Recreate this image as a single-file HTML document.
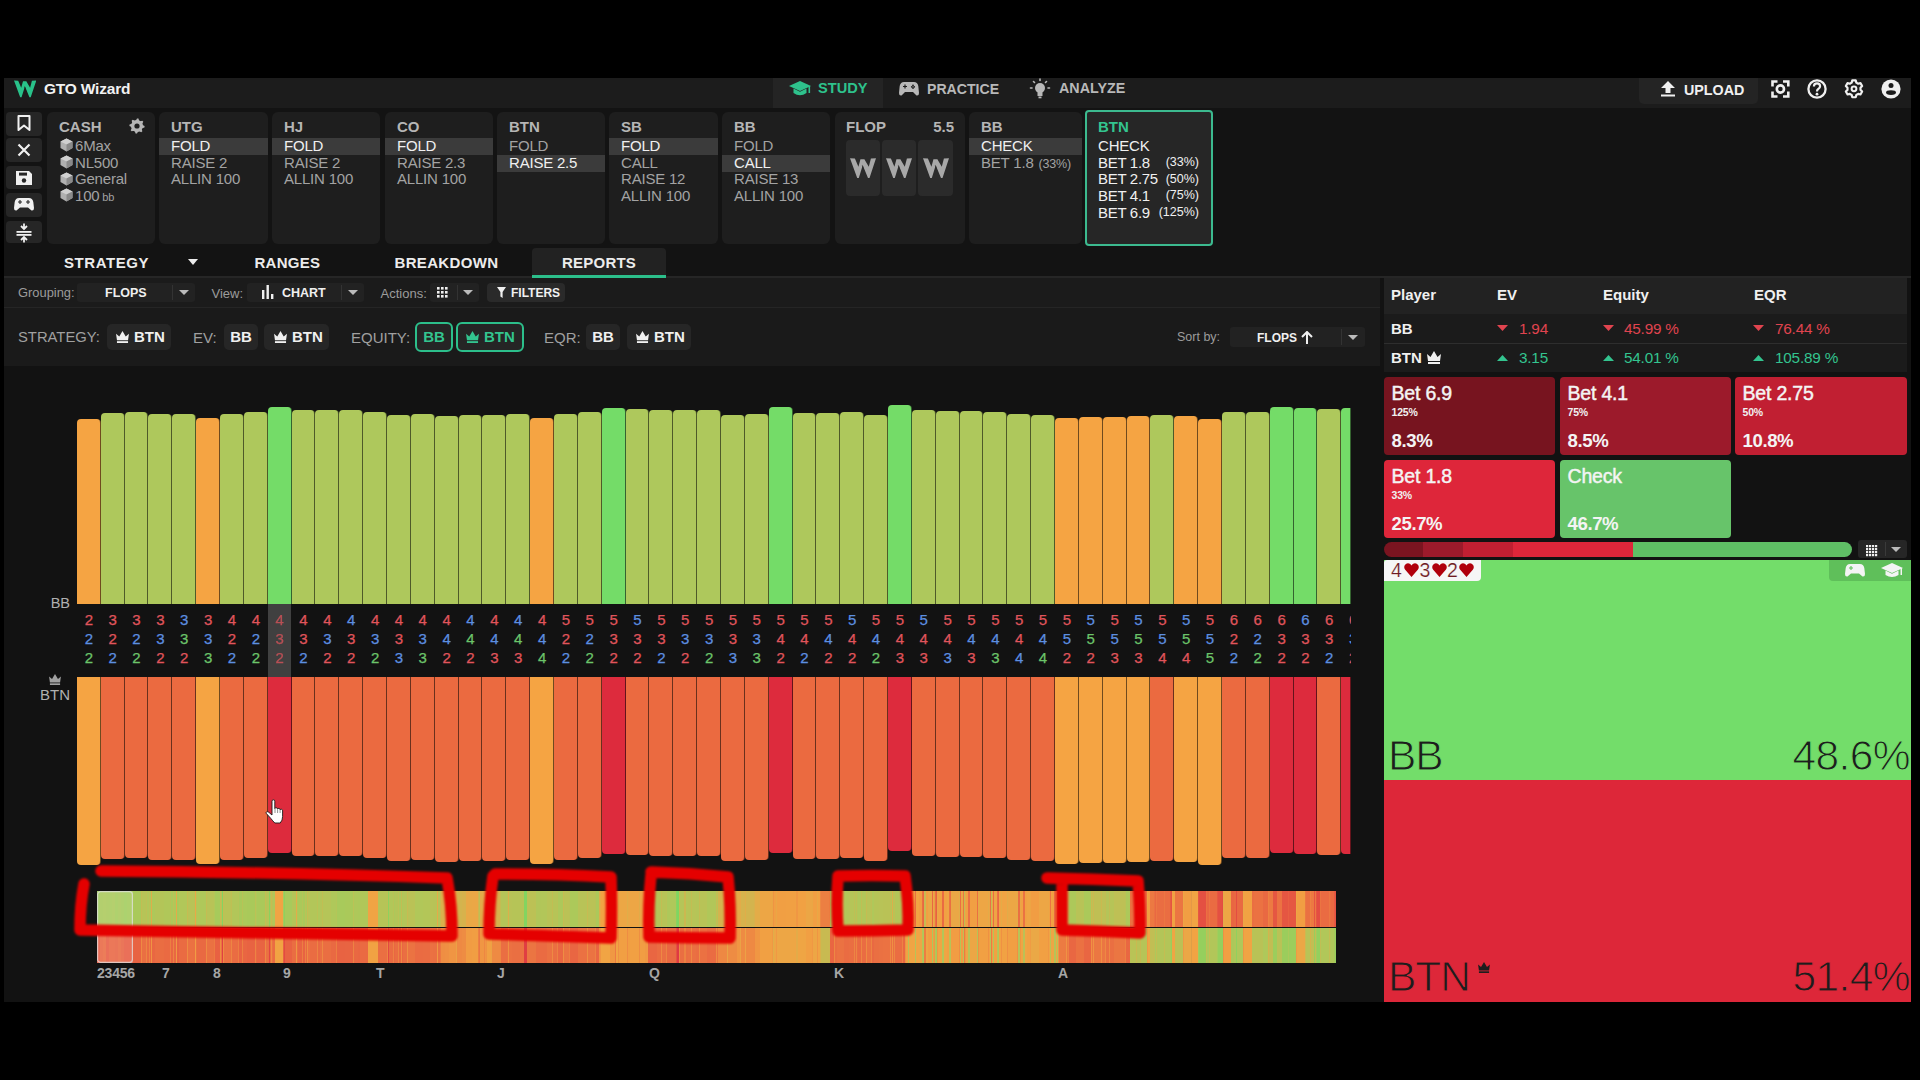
<!DOCTYPE html><html><head><meta charset="utf-8"><style>
html,body{margin:0;padding:0;background:#000;width:1920px;height:1080px;overflow:hidden;}
body{position:relative;font-family:"Liberation Sans",sans-serif;}
div{position:absolute;box-sizing:border-box;}
.t{white-space:nowrap;}
</style></head><body>
<div style="left:4px;top:78px;width:1907px;height:924px;background:#131313;"></div>
<div style="left:4px;top:78px;width:1907px;height:30px;background:#1c1c1c;"></div>
<svg style="position:absolute;left:14px;top:80.4px;" width="22.3" height="17.6" viewBox="0 0 26 20"><g fill="#29c28a"><polygon points="0,0.3 4.9,0.5 8.4,8.7 10.4,1.5 14.5,1.5 8.8,20 7.2,20"/><polygon points="10.4,1.5 14.5,1.5 18.8,8.7 20.9,0.5 26,0.3 19.5,20 18,20"/></g><line x1="12.3" y1="7.5" x2="15.6" y2="18.5" stroke="#1c1c1c" stroke-width="0.7"/></svg>
<div class="t" style="left:44px;top:78.8px;height:19.5px;line-height:19.5px;font-size:15.5px;color:#f2f2f2;font-weight:bold;letter-spacing:-0.2px;">GTO Wizard</div>
<div style="left:773px;top:78px;width:110px;height:30px;background:#242424;"></div>
<svg style="position:absolute;left:789px;top:80px;" width="22" height="18" viewBox="0 0 22 18"><path d="M11,1 L22,6 L11,11 L0,6 Z" fill="#2ec28c"/><path d="M4.5,8.5 L4.5,13 Q11,17.5 17.5,13 L17.5,8.5 L11,11.8 Z" fill="#2ec28c"/><rect x="19.5" y="6" width="1.6" height="7" fill="#2ec28c"/></svg>
<div class="t" style="left:818px;top:79.2px;height:18.6px;line-height:18.6px;font-size:14.6px;color:#2ec28c;font-weight:bold;">STUDY</div>
<svg style="position:absolute;left:899px;top:81px;" width="20" height="15" viewBox="0 0 20 15"><path d="M5,1 L15,1 Q18.5,1 19.3,5 L20,12 Q20,15 17.5,14.5 L14,11 L6,11 L2.5,14.5 Q0,15 0,12 L0.7,5 Q1.5,1 5,1 Z" fill="#b8b8b8"/><path d="M4,5.5 h4 M6,3.5 v4" stroke="#1c1c1c" stroke-width="1.2"/><circle cx="14" cy="4.5" r="0.9" fill="#1c1c1c"/><circle cx="14" cy="7" r="0.9" fill="#1c1c1c"/><circle cx="12.8" cy="5.8" r="0.9" fill="#1c1c1c"/><circle cx="15.2" cy="5.8" r="0.9" fill="#1c1c1c"/></svg>
<div class="t" style="left:927px;top:79.5px;height:18.1px;line-height:18.1px;font-size:14.1px;color:#b8b8b8;font-weight:bold;">PRACTICE</div>
<svg style="position:absolute;left:1029px;top:78px;" width="22" height="22" viewBox="0 0 22 22"><circle cx="11" cy="10" r="5" fill="#b8b8b8"/><rect x="8.5" y="13" width="5" height="5" fill="#b8b8b8"/><rect x="9.5" y="18.5" width="3" height="1.8" fill="#b8b8b8"/><g stroke="#b8b8b8" stroke-width="1.6" stroke-linecap="round"><line x1="11" y1="1" x2="11" y2="2.5"/><line x1="4.5" y1="3.5" x2="5.5" y2="4.5"/><line x1="17.5" y1="3.5" x2="16.5" y2="4.5"/><line x1="1.5" y1="10" x2="3" y2="10"/><line x1="19" y1="10" x2="20.5" y2="10"/></g></svg>
<div class="t" style="left:1059px;top:79.3px;height:18.3px;line-height:18.3px;font-size:14.3px;color:#b8b8b8;font-weight:bold;">ANALYZE</div>
<div style="left:1639px;top:78px;width:119px;height:26px;background:#242424;border-radius:0 0 5px 5px;"></div>
<svg style="position:absolute;left:1660px;top:81px;" width="16" height="16" viewBox="0 0 16 16"><path d="M8,0 L15,7 L10.5,7 L10.5,12 L5.5,12 L5.5,7 L1,7 Z" fill="#f0f0f0"/><rect x="1" y="13.5" width="14" height="2" fill="#f0f0f0"/></svg>
<div class="t" style="left:1684px;top:81.3px;height:18.3px;line-height:18.3px;font-size:14.3px;color:#f0f0f0;font-weight:bold;">UPLOAD</div>
<svg style="position:absolute;left:1771px;top:80px;" width="19" height="18" viewBox="0 0 19 18"><g fill="none" stroke="#f0f0f0" stroke-width="2.6"><path d="M1.5,6.5 V1.5 H6.5"/><path d="M12,1.5 H17.3 V6.5"/><path d="M17.3,11.5 V16.5 H12"/><path d="M6.5,16.5 H1.5 V11.5"/></g><circle cx="9.4" cy="9" r="3.6" fill="none" stroke="#f0f0f0" stroke-width="2.6"/></svg>
<svg style="position:absolute;left:1807px;top:79px;" width="20" height="20" viewBox="0 0 20 20"><circle cx="10" cy="10" r="8.6" fill="none" stroke="#f0f0f0" stroke-width="2.3"/><path d="M6.9,7.6 Q6.9,4.4 10,4.4 Q13.1,4.4 13.1,7.2 Q13.1,9 11,10.2 Q10,10.8 10,12.4" fill="none" stroke="#f0f0f0" stroke-width="2.2"/><circle cx="10" cy="15.2" r="1.4" fill="#f0f0f0"/></svg>
<svg style="position:absolute;left:1844px;top:79px;" width="20" height="20" viewBox="0 0 20 20"><polygon points="7.67,3.62 8.29,1.37 11.71,1.37 12.33,3.62 14.19,4.70 16.45,4.11 18.15,7.07 16.51,8.73 16.51,10.87 18.15,12.53 16.45,15.49 14.19,14.90 12.33,15.98 11.71,18.23 8.29,18.23 7.67,15.98 5.81,14.90 3.55,15.49 1.85,12.53 3.49,10.87 3.49,8.73 1.85,7.07 3.55,4.11 5.81,4.70" fill="none" stroke="#f0f0f0" stroke-width="2.2" stroke-linejoin="round"/><circle cx="10" cy="9.8" r="2.4" fill="none" stroke="#f0f0f0" stroke-width="2"/></svg>
<svg style="position:absolute;left:1881px;top:79px;" width="20" height="20" viewBox="0 0 20 20"><circle cx="10" cy="10" r="9.6" fill="#f0f0f0"/><circle cx="10" cy="6.6" r="2.5" fill="#1c1c1c"/><ellipse cx="10" cy="13.6" rx="5" ry="2.3" fill="#1c1c1c"/></svg>
<div style="left:6px;top:112px;width:36px;height:24px;background:#262626;border-radius:4px;"></div>
<div style="left:6px;top:138px;width:36px;height:24px;background:#262626;border-radius:4px;"></div>
<div style="left:6px;top:166px;width:36px;height:23px;background:#262626;border-radius:4px;"></div>
<div style="left:6px;top:193px;width:36px;height:24px;background:#262626;border-radius:4px;"></div>
<div style="left:6px;top:221px;width:36px;height:22px;background:#262626;border-radius:4px;"></div>
<svg style="position:absolute;left:17px;top:115px;" width="14" height="16" viewBox="0 0 14 16"><path d="M1.5,1 H12.5 V15 L7,10.5 L1.5,15 Z" fill="none" stroke="#f0f0f0" stroke-width="2" stroke-linejoin="round"/></svg>
<svg style="position:absolute;left:17px;top:143px;" width="14" height="14" viewBox="0 0 14 14"><path d="M1.5,1.5 L12.5,12.5 M12.5,1.5 L1.5,12.5" stroke="#f0f0f0" stroke-width="2.2"/></svg>
<svg style="position:absolute;left:15px;top:170px;" width="18" height="16" viewBox="0 0 18 16"><path d="M1,1 H14 L17,4 V15 H1 Z" fill="#f0f0f0"/><rect x="4" y="2.6" width="8" height="3" fill="#262626"/><circle cx="9" cy="10.5" r="2.2" fill="#262626"/></svg>
<svg style="position:absolute;left:14px;top:197px;" width="20" height="14" viewBox="0 0 20 14"><path d="M5,1 L15,1 Q18.5,1 19.3,5 L20,11 Q20,14 17.5,13.5 L14,10.5 L6,10.5 L2.5,13.5 Q0,14 0,11 L0.7,5 Q1.5,1 5,1 Z" fill="#f0f0f0"/><path d="M4,5 h4 M6,3 v4" stroke="#262626" stroke-width="1.1"/><path d="M12,5 h4 M14,3 v4" stroke="#262626" stroke-width="1.1"/></svg>
<svg style="position:absolute;left:16px;top:223px;" width="16" height="20" viewBox="0 0 16 20"><path d="M8,0.5 V5.5 M5,3 L8,6 L11,3" fill="none" stroke="#f0f0f0" stroke-width="1.8"/><rect x="0.5" y="8" width="15" height="1.8" fill="#f0f0f0"/><rect x="0.5" y="11" width="15" height="1.8" fill="#f0f0f0"/><path d="M8,19.5 V14.5 M5,17 L8,14 L11,17" fill="none" stroke="#f0f0f0" stroke-width="1.8"/></svg>
<div style="left:47px;top:112px;width:108px;height:132px;background:#1e1e1e;border-radius:6px;"></div>
<div class="t" style="left:59px;top:116.5px;height:19px;line-height:19px;font-size:15px;color:#b5b5b5;font-weight:bold;">CASH</div>
<svg style="position:absolute;left:129px;top:118px;" width="16" height="16" viewBox="0 0 16 16"><polygon points="15.60,8.00 15.45,9.48 13.20,10.15 12.68,11.12 13.37,13.37 12.22,14.32 10.15,13.20 9.10,13.52 8.00,15.60 6.52,15.45 5.85,13.20 4.88,12.68 2.63,13.37 1.68,12.22 2.80,10.15 2.48,9.10 0.40,8.00 0.55,6.52 2.80,5.85 3.32,4.88 2.63,2.63 3.78,1.68 5.85,2.80 6.90,2.48 8.00,0.40 9.48,0.55 10.15,2.80 11.12,3.32 13.37,2.63 14.32,3.78 13.20,5.85 13.52,6.90" fill="#b5b5b5"/><circle cx="8" cy="8" r="5.928" fill="#b5b5b5"/><circle cx="8" cy="8" r="2.6" fill="#1e1e1e"/></svg>
<svg style="position:absolute;left:60px;top:138.2px;" width="13" height="14" viewBox="0 0 13 14"><path d="M6.5,0.5 L12.5,3.5 L12.5,10 L6.5,13.5 L0.5,10 L0.5,3.5 Z" fill="#b0b0b0"/><path d="M0.5,3.5 L6.5,6.5 L12.5,3.5 L6.5,0.5 Z" fill="#d0d0d0"/><path d="M6.5,6.5 L6.5,13.5 L12.5,10 L12.5,3.5 Z" fill="#8a8a8a"/></svg>
<div class="t" style="left:75px;top:135.7px;height:19px;line-height:19px;font-size:15px;color:#a3a3a3;font-weight:normal;letter-spacing:-0.2px;">6Max</div>
<svg style="position:absolute;left:60px;top:155px;" width="13" height="14" viewBox="0 0 13 14"><path d="M6.5,0.5 L12.5,3.5 L12.5,10 L6.5,13.5 L0.5,10 L0.5,3.5 Z" fill="#b0b0b0"/><path d="M0.5,3.5 L6.5,6.5 L12.5,3.5 L6.5,0.5 Z" fill="#d0d0d0"/><path d="M6.5,6.5 L6.5,13.5 L12.5,10 L12.5,3.5 Z" fill="#8a8a8a"/></svg>
<div class="t" style="left:75px;top:152.5px;height:19px;line-height:19px;font-size:15px;color:#a3a3a3;font-weight:normal;letter-spacing:-0.2px;">NL500</div>
<svg style="position:absolute;left:60px;top:171.6px;" width="13" height="14" viewBox="0 0 13 14"><path d="M6.5,0.5 L12.5,3.5 L12.5,10 L6.5,13.5 L0.5,10 L0.5,3.5 Z" fill="#b0b0b0"/><path d="M0.5,3.5 L6.5,6.5 L12.5,3.5 L6.5,0.5 Z" fill="#d0d0d0"/><path d="M6.5,6.5 L6.5,13.5 L12.5,10 L12.5,3.5 Z" fill="#8a8a8a"/></svg>
<div class="t" style="left:75px;top:169.1px;height:19px;line-height:19px;font-size:15px;color:#a3a3a3;font-weight:normal;letter-spacing:-0.2px;">General</div>
<svg style="position:absolute;left:60px;top:188.2px;" width="13" height="14" viewBox="0 0 13 14"><path d="M6.5,0.5 L12.5,3.5 L12.5,10 L6.5,13.5 L0.5,10 L0.5,3.5 Z" fill="#b0b0b0"/><path d="M0.5,3.5 L6.5,6.5 L12.5,3.5 L6.5,0.5 Z" fill="#d0d0d0"/><path d="M6.5,6.5 L6.5,13.5 L12.5,10 L12.5,3.5 Z" fill="#8a8a8a"/></svg>
<div class="t" style="left:75px;top:185.7px;height:19px;line-height:19px;font-size:15px;color:#a3a3a3;font-weight:normal;letter-spacing:-0.2px;">100<span style="font-size:11px;"> bb</span></div>
<div style="left:159px;top:112px;width:109px;height:132px;background:#1e1e1e;border-radius:6px;"></div>
<div style="left:159px;top:137.5px;width:109px;height:17.0px;background:#3b3b3b;"></div>
<div class="t" style="left:171px;top:116.7px;height:19px;line-height:19px;font-size:15px;color:#b5b5b5;font-weight:bold;">UTG</div>
<div class="t" style="left:171px;top:135.7px;height:19px;line-height:19px;font-size:15px;color:#f0f0f0;font-weight:normal;letter-spacing:-0.2px;">FOLD</div>
<div class="t" style="left:171px;top:152.5px;height:19px;line-height:19px;font-size:15px;color:#a3a3a3;font-weight:normal;letter-spacing:-0.2px;">RAISE 2</div>
<div class="t" style="left:171px;top:169.1px;height:19px;line-height:19px;font-size:15px;color:#a3a3a3;font-weight:normal;letter-spacing:-0.2px;">ALLIN 100</div>
<div style="left:272px;top:112px;width:108px;height:132px;background:#1e1e1e;border-radius:6px;"></div>
<div style="left:272px;top:137.5px;width:108px;height:17.0px;background:#3b3b3b;"></div>
<div class="t" style="left:284px;top:116.7px;height:19px;line-height:19px;font-size:15px;color:#b5b5b5;font-weight:bold;">HJ</div>
<div class="t" style="left:284px;top:135.7px;height:19px;line-height:19px;font-size:15px;color:#f0f0f0;font-weight:normal;letter-spacing:-0.2px;">FOLD</div>
<div class="t" style="left:284px;top:152.5px;height:19px;line-height:19px;font-size:15px;color:#a3a3a3;font-weight:normal;letter-spacing:-0.2px;">RAISE 2</div>
<div class="t" style="left:284px;top:169.1px;height:19px;line-height:19px;font-size:15px;color:#a3a3a3;font-weight:normal;letter-spacing:-0.2px;">ALLIN 100</div>
<div style="left:385px;top:112px;width:108px;height:132px;background:#1e1e1e;border-radius:6px;"></div>
<div style="left:385px;top:137.5px;width:108px;height:17.0px;background:#3b3b3b;"></div>
<div class="t" style="left:397px;top:116.7px;height:19px;line-height:19px;font-size:15px;color:#b5b5b5;font-weight:bold;">CO</div>
<div class="t" style="left:397px;top:135.7px;height:19px;line-height:19px;font-size:15px;color:#f0f0f0;font-weight:normal;letter-spacing:-0.2px;">FOLD</div>
<div class="t" style="left:397px;top:152.5px;height:19px;line-height:19px;font-size:15px;color:#a3a3a3;font-weight:normal;letter-spacing:-0.2px;">RAISE 2.3</div>
<div class="t" style="left:397px;top:169.1px;height:19px;line-height:19px;font-size:15px;color:#a3a3a3;font-weight:normal;letter-spacing:-0.2px;">ALLIN 100</div>
<div style="left:497px;top:112px;width:108px;height:132px;background:#1e1e1e;border-radius:6px;"></div>
<div style="left:497px;top:154.5px;width:108px;height:17.0px;background:#3b3b3b;"></div>
<div class="t" style="left:509px;top:116.7px;height:19px;line-height:19px;font-size:15px;color:#b5b5b5;font-weight:bold;">BTN</div>
<div class="t" style="left:509px;top:135.7px;height:19px;line-height:19px;font-size:15px;color:#a3a3a3;font-weight:normal;letter-spacing:-0.2px;">FOLD</div>
<div class="t" style="left:509px;top:152.5px;height:19px;line-height:19px;font-size:15px;color:#f0f0f0;font-weight:normal;letter-spacing:-0.2px;">RAISE 2.5</div>
<div style="left:609px;top:112px;width:109px;height:132px;background:#1e1e1e;border-radius:6px;"></div>
<div style="left:609px;top:137.5px;width:109px;height:17.0px;background:#3b3b3b;"></div>
<div class="t" style="left:621px;top:116.7px;height:19px;line-height:19px;font-size:15px;color:#b5b5b5;font-weight:bold;">SB</div>
<div class="t" style="left:621px;top:135.7px;height:19px;line-height:19px;font-size:15px;color:#f0f0f0;font-weight:normal;letter-spacing:-0.2px;">FOLD</div>
<div class="t" style="left:621px;top:152.5px;height:19px;line-height:19px;font-size:15px;color:#a3a3a3;font-weight:normal;letter-spacing:-0.2px;">CALL</div>
<div class="t" style="left:621px;top:169.1px;height:19px;line-height:19px;font-size:15px;color:#a3a3a3;font-weight:normal;letter-spacing:-0.2px;">RAISE 12</div>
<div class="t" style="left:621px;top:185.7px;height:19px;line-height:19px;font-size:15px;color:#a3a3a3;font-weight:normal;letter-spacing:-0.2px;">ALLIN 100</div>
<div style="left:722px;top:112px;width:108px;height:132px;background:#1e1e1e;border-radius:6px;"></div>
<div style="left:722px;top:154.5px;width:108px;height:17.0px;background:#3b3b3b;"></div>
<div class="t" style="left:734px;top:116.7px;height:19px;line-height:19px;font-size:15px;color:#b5b5b5;font-weight:bold;">BB</div>
<div class="t" style="left:734px;top:135.7px;height:19px;line-height:19px;font-size:15px;color:#a3a3a3;font-weight:normal;letter-spacing:-0.2px;">FOLD</div>
<div class="t" style="left:734px;top:152.5px;height:19px;line-height:19px;font-size:15px;color:#f0f0f0;font-weight:normal;letter-spacing:-0.2px;">CALL</div>
<div class="t" style="left:734px;top:169.1px;height:19px;line-height:19px;font-size:15px;color:#a3a3a3;font-weight:normal;letter-spacing:-0.2px;">RAISE 13</div>
<div class="t" style="left:734px;top:185.7px;height:19px;line-height:19px;font-size:15px;color:#a3a3a3;font-weight:normal;letter-spacing:-0.2px;">ALLIN 100</div>
<div style="left:835px;top:112px;width:130px;height:132px;background:#1e1e1e;border-radius:6px;"></div>
<div class="t" style="left:846px;top:116.5px;height:19px;line-height:19px;font-size:15px;color:#b5b5b5;font-weight:bold;">FLOP</div>
<div class="t" style="right:966px;top:116.5px;height:19px;line-height:19px;font-size:15px;color:#b5b5b5;font-weight:bold;">5.5</div>
<div style="left:846px;top:140px;width:34px;height:56px;background:#2b2b2b;border-radius:4px;"></div>
<svg style="position:absolute;left:850.0px;top:158px;" width="26" height="20" viewBox="0 0 26 20"><g fill="#a8a8a8"><polygon points="0,0.3 4.9,0.5 8.4,8.7 10.4,1.5 14.5,1.5 8.8,20 7.2,20"/><polygon points="10.4,1.5 14.5,1.5 18.8,8.7 20.9,0.5 26,0.3 19.5,20 18,20"/></g><line x1="12.3" y1="7.5" x2="15.6" y2="18.5" stroke="#2b2b2b" stroke-width="0.7"/></svg>
<div style="left:882px;top:140px;width:34px;height:56px;background:#2b2b2b;border-radius:4px;"></div>
<svg style="position:absolute;left:886.0px;top:158px;" width="26" height="20" viewBox="0 0 26 20"><g fill="#a8a8a8"><polygon points="0,0.3 4.9,0.5 8.4,8.7 10.4,1.5 14.5,1.5 8.8,20 7.2,20"/><polygon points="10.4,1.5 14.5,1.5 18.8,8.7 20.9,0.5 26,0.3 19.5,20 18,20"/></g><line x1="12.3" y1="7.5" x2="15.6" y2="18.5" stroke="#2b2b2b" stroke-width="0.7"/></svg>
<div style="left:918px;top:140px;width:35px;height:56px;background:#2b2b2b;border-radius:4px;"></div>
<svg style="position:absolute;left:922.5px;top:158px;" width="26" height="20" viewBox="0 0 26 20"><g fill="#a8a8a8"><polygon points="0,0.3 4.9,0.5 8.4,8.7 10.4,1.5 14.5,1.5 8.8,20 7.2,20"/><polygon points="10.4,1.5 14.5,1.5 18.8,8.7 20.9,0.5 26,0.3 19.5,20 18,20"/></g><line x1="12.3" y1="7.5" x2="15.6" y2="18.5" stroke="#2b2b2b" stroke-width="0.7"/></svg>
<div style="left:969px;top:112px;width:113px;height:132px;background:#1e1e1e;border-radius:6px;"></div>
<div style="left:969px;top:137.5px;width:113px;height:17.0px;background:#3b3b3b;"></div>
<div class="t" style="left:981px;top:116.7px;height:19px;line-height:19px;font-size:15px;color:#b5b5b5;font-weight:bold;">BB</div>
<div class="t" style="left:981px;top:135.7px;height:19px;line-height:19px;font-size:15px;color:#f0f0f0;font-weight:normal;letter-spacing:-0.2px;">CHECK</div>
<div class="t" style="left:981px;top:152.5px;height:19px;line-height:19px;font-size:15px;color:#a3a3a3;font-weight:normal;letter-spacing:-0.2px;">BET 1.8 <span style="font-size:12.5px;margin-left:1px;">(33%)</span></div>
<div style="left:1085px;top:110px;width:128px;height:136px;background:#262626;border:2.5px solid #3cba8f;border-radius:4px;"></div>
<div class="t" style="left:1098px;top:116.5px;height:19px;line-height:19px;font-size:15px;color:#33c48f;font-weight:bold;">BTN</div>
<div class="t" style="left:1098px;top:135.5px;height:19px;line-height:19px;font-size:15px;color:#f0f0f0;font-weight:normal;letter-spacing:-0.2px;">CHECK</div>
<div class="t" style="left:1098px;top:152.5px;height:19px;line-height:19px;font-size:15px;color:#f0f0f0;font-weight:normal;letter-spacing:-0.3px;">BET 1.8</div>
<div class="t" style="right:721px;top:154.2px;height:16.5px;line-height:16.5px;font-size:12.5px;color:#f0f0f0;font-weight:normal;">(33%)</div>
<div class="t" style="left:1098px;top:169.0px;height:19px;line-height:19px;font-size:15px;color:#f0f0f0;font-weight:normal;letter-spacing:-0.3px;">BET 2.75</div>
<div class="t" style="right:721px;top:170.8px;height:16.5px;line-height:16.5px;font-size:12.5px;color:#f0f0f0;font-weight:normal;">(50%)</div>
<div class="t" style="left:1098px;top:185.5px;height:19px;line-height:19px;font-size:15px;color:#f0f0f0;font-weight:normal;letter-spacing:-0.3px;">BET 4.1</div>
<div class="t" style="right:721px;top:187.2px;height:16.5px;line-height:16.5px;font-size:12.5px;color:#f0f0f0;font-weight:normal;">(75%)</div>
<div class="t" style="left:1098px;top:202.5px;height:19px;line-height:19px;font-size:15px;color:#f0f0f0;font-weight:normal;letter-spacing:-0.3px;">BET 6.9</div>
<div class="t" style="right:721px;top:204.2px;height:16.5px;line-height:16.5px;font-size:12.5px;color:#f0f0f0;font-weight:normal;">(125%)</div>
<div class="t" style="left:64px;top:252.5px;height:19px;line-height:19px;font-size:15px;color:#ececec;font-weight:bold;letter-spacing:0.57px;">STRATEGY</div>
<svg style="position:absolute;left:188px;top:259px;" width="10" height="6" viewBox="0 0 10 6"><path d="M0,0 H10 L5,6 Z" fill="#ececec"/></svg>
<div class="t" style="left:254.5px;top:252.5px;height:19px;line-height:19px;font-size:15px;color:#ececec;font-weight:bold;letter-spacing:0.25px;">RANGES</div>
<div class="t" style="left:394.5px;top:252.5px;height:19px;line-height:19px;font-size:15px;color:#ececec;font-weight:bold;letter-spacing:0.33px;">BREAKDOWN</div>
<div style="left:532px;top:248px;width:134px;height:29px;background:#222;border-radius:4px 4px 0 0;"></div>
<div class="t" style="left:562px;top:252.5px;height:19px;line-height:19px;font-size:15px;color:#ececec;font-weight:bold;letter-spacing:0.22px;">REPORTS</div>
<div style="left:4px;top:276px;width:1907px;height:2px;background:#262626;"></div>
<div style="left:532px;top:275px;width:134px;height:3px;background:#2cbf8b;"></div>
<div style="left:4px;top:278px;width:1376px;height:29px;background:#1b1b1b;"></div>
<div style="left:4px;top:307px;width:1376px;height:1px;background:#252525;"></div>
<div class="t" style="left:18px;top:284.6px;height:16.9px;line-height:16.9px;font-size:12.9px;color:#9c9c9c;font-weight:normal;">Grouping:</div>
<div style="left:77px;top:283px;width:118px;height:19px;background:#222;border-radius:3px;"></div>
<div style="left:172px;top:285px;width:1px;height:15px;background:#333;"></div>
<div class="t" style="left:105px;top:284.8px;height:16.5px;line-height:16.5px;font-size:12.5px;color:#f0f0f0;font-weight:bold;">FLOPS</div>
<svg style="position:absolute;left:179px;top:290px;" width="10" height="5" viewBox="0 0 10 5"><path d="M0,0 H10 L5,5 Z" fill="#bbb"/></svg>
<div class="t" style="left:211.5px;top:284.5px;height:17px;line-height:17px;font-size:13px;color:#9c9c9c;font-weight:normal;">View:</div>
<div style="left:247px;top:283px;width:117px;height:19px;background:#222;border-radius:3px;"></div>
<div style="left:341px;top:285px;width:1px;height:15px;background:#333;"></div>
<svg style="position:absolute;left:262px;top:285px;" width="12" height="14" viewBox="0 0 12 14"><rect x="0" y="5" width="2.4" height="9" fill="#f0f0f0"/><rect x="4.5" y="0" width="2.4" height="14" fill="#f0f0f0"/><rect x="9" y="9" width="2.4" height="5" fill="#f0f0f0"/></svg>
<div class="t" style="left:282px;top:284.8px;height:16.5px;line-height:16.5px;font-size:12.5px;color:#f0f0f0;font-weight:bold;">CHART</div>
<svg style="position:absolute;left:348px;top:290px;" width="10" height="5" viewBox="0 0 10 5"><path d="M0,0 H10 L5,5 Z" fill="#bbb"/></svg>
<div class="t" style="left:380.5px;top:284.5px;height:17px;line-height:17px;font-size:13px;color:#9c9c9c;font-weight:normal;">Actions:</div>
<div style="left:430px;top:283px;width:49px;height:19px;background:#222;border-radius:3px;"></div>
<div style="left:457px;top:285px;width:1px;height:15px;background:#333;"></div>
<svg style="position:absolute;left:437px;top:287px;" width="11" height="11" viewBox="0 0 11 11"><rect x="0" y="0" width="2.6" height="2.6" fill="#f0f0f0"/><rect x="0" y="4" width="2.6" height="2.6" fill="#f0f0f0"/><rect x="0" y="8" width="2.6" height="2.6" fill="#f0f0f0"/><rect x="4" y="0" width="2.6" height="2.6" fill="#f0f0f0"/><rect x="4" y="4" width="2.6" height="2.6" fill="#f0f0f0"/><rect x="4" y="8" width="2.6" height="2.6" fill="#f0f0f0"/><rect x="8" y="0" width="2.6" height="2.6" fill="#f0f0f0"/><rect x="8" y="4" width="2.6" height="2.6" fill="#f0f0f0"/><rect x="8" y="8" width="2.6" height="2.6" fill="#f0f0f0"/></svg>
<svg style="position:absolute;left:463px;top:290px;" width="10" height="5" viewBox="0 0 10 5"><path d="M0,0 H10 L5,5 Z" fill="#bbb"/></svg>
<div style="left:487px;top:283px;width:78px;height:19px;background:#2a2a2a;border-radius:4px;"></div>
<svg style="position:absolute;left:497px;top:287px;" width="9" height="11" viewBox="0 0 9 11"><path d="M0,0 H9 L5.6,5 V11 L3.4,9.5 V5 Z" fill="#f0f0f0"/></svg>
<div class="t" style="left:511px;top:285.0px;height:16px;line-height:16px;font-size:12px;color:#f0f0f0;font-weight:bold;">FILTERS</div>
<div style="left:4px;top:308px;width:1376px;height:58px;background:#1a1a1a;"></div>
<div class="t" style="left:18px;top:327.6px;height:18.8px;line-height:18.8px;font-size:14.8px;color:#a0a0a0;font-weight:normal;">STRATEGY:</div>
<div style="left:107px;top:324px;width:64px;height:26px;background:#262626;border-radius:5px;"></div>
<svg style="position:absolute;left:115.5px;top:331px;" width="13" height="12" viewBox="0 0 14 13"><path d="M0,3 L3.5,6 L7,0 L10.5,6 L14,3 L13,10 H1 Z" fill="#f0f0f0"/><rect x="1" y="11" width="12" height="2" fill="#f0f0f0"/></svg>
<div class="t" style="left:134px;top:327.3px;height:19px;line-height:19px;font-size:15px;color:#f0f0f0;font-weight:bold;">BTN</div>
<div class="t" style="left:193px;top:327.5px;height:19px;line-height:19px;font-size:15px;color:#a0a0a0;font-weight:normal;">EV:</div>
<div style="left:224px;top:324px;width:34px;height:26px;background:#262626;border-radius:5px;"></div>
<div class="t" style="left:41.0px;width:400px;text-align:center;top:327.3px;height:19px;line-height:19px;font-size:15px;color:#f0f0f0;font-weight:bold;">BB</div>
<div style="left:264px;top:324px;width:65px;height:26px;background:#262626;border-radius:5px;"></div>
<svg style="position:absolute;left:273.5px;top:331px;" width="13" height="12" viewBox="0 0 14 13"><path d="M0,3 L3.5,6 L7,0 L10.5,6 L14,3 L13,10 H1 Z" fill="#f0f0f0"/><rect x="1" y="11" width="12" height="2" fill="#f0f0f0"/></svg>
<div class="t" style="left:292px;top:327.3px;height:19px;line-height:19px;font-size:15px;color:#f0f0f0;font-weight:bold;">BTN</div>
<div class="t" style="left:351px;top:327.5px;height:19px;line-height:19px;font-size:15px;color:#a0a0a0;font-weight:normal;">EQUITY:</div>
<div style="left:415px;top:322px;width:38px;height:30px;background:#252525;border:2.5px solid #2cbf8b;border-radius:6px;"></div>
<div class="t" style="left:234.0px;width:400px;text-align:center;top:327.3px;height:19px;line-height:19px;font-size:15px;color:#33c48f;font-weight:bold;">BB</div>
<div style="left:456px;top:322px;width:68px;height:30px;background:#252525;border:2.5px solid #2cbf8b;border-radius:6px;"></div>
<svg style="position:absolute;left:465.5px;top:331px;" width="13" height="12" viewBox="0 0 14 13"><path d="M0,3 L3.5,6 L7,0 L10.5,6 L14,3 L13,10 H1 Z" fill="#33c48f"/><rect x="1" y="11" width="12" height="2" fill="#33c48f"/></svg>
<div class="t" style="left:484px;top:327.3px;height:19px;line-height:19px;font-size:15px;color:#33c48f;font-weight:bold;">BTN</div>
<div class="t" style="left:544px;top:327.5px;height:19px;line-height:19px;font-size:15px;color:#a0a0a0;font-weight:normal;">EQR:</div>
<div style="left:586px;top:324px;width:34px;height:26px;background:#262626;border-radius:5px;"></div>
<div class="t" style="left:403.0px;width:400px;text-align:center;top:327.3px;height:19px;line-height:19px;font-size:15px;color:#f0f0f0;font-weight:bold;">BB</div>
<div style="left:627px;top:324px;width:64px;height:26px;background:#262626;border-radius:5px;"></div>
<svg style="position:absolute;left:635.5px;top:331px;" width="13" height="12" viewBox="0 0 14 13"><path d="M0,3 L3.5,6 L7,0 L10.5,6 L14,3 L13,10 H1 Z" fill="#f0f0f0"/><rect x="1" y="11" width="12" height="2" fill="#f0f0f0"/></svg>
<div class="t" style="left:654px;top:327.3px;height:19px;line-height:19px;font-size:15px;color:#f0f0f0;font-weight:bold;">BTN</div>
<div class="t" style="left:1177px;top:329.2px;height:16.5px;line-height:16.5px;font-size:12.5px;color:#9c9c9c;font-weight:normal;">Sort by:</div>
<div style="left:1230px;top:327px;width:135px;height:20px;background:#222;border-radius:3px;"></div>
<div style="left:1341px;top:329px;width:1px;height:16px;background:#333;"></div>
<div class="t" style="left:1257px;top:329.5px;height:16px;line-height:16px;font-size:12px;color:#f0f0f0;font-weight:bold;">FLOPS</div>
<svg style="position:absolute;left:1301px;top:331px;" width="12" height="13" viewBox="0 0 12 13"><path d="M6,1 V13 M1,6 L6,1 L11,6" fill="none" stroke="#f0f0f0" stroke-width="2"/></svg>
<svg style="position:absolute;left:1348px;top:335px;" width="10" height="5" viewBox="0 0 10 5"><path d="M0,0 H10 L5,5 Z" fill="#bbb"/></svg>
<div style="left:4px;top:366px;width:1376px;height:636px;background:#121212;"></div>
<div class="t" style="right:1850px;top:594.2px;height:18.5px;line-height:18.5px;font-size:14.5px;color:#b0b0b0;font-weight:normal;">BB</div>
<svg style="position:absolute;left:49px;top:674px;" width="12" height="11" viewBox="0 0 14 13"><path d="M0,3 L3.5,6 L7,0 L10.5,6 L14,3 L13,10 H1 Z" fill="#a0a0a0"/><rect x="1" y="11" width="12" height="2" fill="#a0a0a0"/></svg>
<div class="t" style="right:1850px;top:684.5px;height:19px;line-height:19px;font-size:15px;color:#b0b0b0;font-weight:normal;">BTN</div>
<div style="left:267.74px;top:604px;width:22.855000000000018px;height:73px;background:#404040;"></div>
<div style="left:76.90px;top:418.7px;width:23.86px;height:185.3px;background:#f5a443;border-right:1px solid rgba(0,0,0,0.55);border-radius:4px 4px 0 0;"></div><div style="left:76.90px;top:677px;width:23.86px;height:187.7px;background:#f5a443;border-right:1px solid rgba(0,0,0,0.55);border-radius:0 0 4px 4px;"></div><div class="t" style="left:76.90px;width:23.86px;text-align:center;top:611.3px;height:18px;line-height:18px;font-size:15px;color:#e0555c;-webkit-text-stroke:0.25px #e0555c;">2</div><div class="t" style="left:76.90px;width:23.86px;text-align:center;top:630.0px;height:18px;line-height:18px;font-size:15px;color:#5d8fe0;-webkit-text-stroke:0.25px #5d8fe0;">2</div><div class="t" style="left:76.90px;width:23.86px;text-align:center;top:648.7px;height:18px;line-height:18px;font-size:15px;color:#6cc46a;-webkit-text-stroke:0.25px #6cc46a;">2</div><div style="left:100.76px;top:413.0px;width:23.86px;height:191.0px;background:#aec85c;border-right:1px solid rgba(0,0,0,0.55);border-radius:4px 4px 0 0;"></div><div style="left:100.76px;top:677px;width:23.86px;height:182.0px;background:#eb6a40;border-right:1px solid rgba(0,0,0,0.55);border-radius:0 0 4px 4px;"></div><div class="t" style="left:100.76px;width:23.86px;text-align:center;top:611.3px;height:18px;line-height:18px;font-size:15px;color:#e0555c;-webkit-text-stroke:0.25px #e0555c;">3</div><div class="t" style="left:100.76px;width:23.86px;text-align:center;top:630.0px;height:18px;line-height:18px;font-size:15px;color:#e0555c;-webkit-text-stroke:0.25px #e0555c;">2</div><div class="t" style="left:100.76px;width:23.86px;text-align:center;top:648.7px;height:18px;line-height:18px;font-size:15px;color:#5d8fe0;-webkit-text-stroke:0.25px #5d8fe0;">2</div><div style="left:124.61px;top:411.8px;width:23.86px;height:192.2px;background:#aec85c;border-right:1px solid rgba(0,0,0,0.55);border-radius:4px 4px 0 0;"></div><div style="left:124.61px;top:677px;width:23.86px;height:180.8px;background:#eb6a40;border-right:1px solid rgba(0,0,0,0.55);border-radius:0 0 4px 4px;"></div><div class="t" style="left:124.61px;width:23.86px;text-align:center;top:611.3px;height:18px;line-height:18px;font-size:15px;color:#e0555c;-webkit-text-stroke:0.25px #e0555c;">3</div><div class="t" style="left:124.61px;width:23.86px;text-align:center;top:630.0px;height:18px;line-height:18px;font-size:15px;color:#5d8fe0;-webkit-text-stroke:0.25px #5d8fe0;">2</div><div class="t" style="left:124.61px;width:23.86px;text-align:center;top:648.7px;height:18px;line-height:18px;font-size:15px;color:#6cc46a;-webkit-text-stroke:0.25px #6cc46a;">2</div><div style="left:148.47px;top:413.8px;width:23.86px;height:190.2px;background:#aec85c;border-right:1px solid rgba(0,0,0,0.55);border-radius:4px 4px 0 0;"></div><div style="left:148.47px;top:677px;width:23.86px;height:182.8px;background:#eb6a40;border-right:1px solid rgba(0,0,0,0.55);border-radius:0 0 4px 4px;"></div><div class="t" style="left:148.47px;width:23.86px;text-align:center;top:611.3px;height:18px;line-height:18px;font-size:15px;color:#e0555c;-webkit-text-stroke:0.25px #e0555c;">3</div><div class="t" style="left:148.47px;width:23.86px;text-align:center;top:630.0px;height:18px;line-height:18px;font-size:15px;color:#5d8fe0;-webkit-text-stroke:0.25px #5d8fe0;">3</div><div class="t" style="left:148.47px;width:23.86px;text-align:center;top:648.7px;height:18px;line-height:18px;font-size:15px;color:#e0555c;-webkit-text-stroke:0.25px #e0555c;">2</div><div style="left:172.32px;top:413.8px;width:23.86px;height:190.2px;background:#aec85c;border-right:1px solid rgba(0,0,0,0.55);border-radius:4px 4px 0 0;"></div><div style="left:172.32px;top:677px;width:23.86px;height:182.8px;background:#eb6a40;border-right:1px solid rgba(0,0,0,0.55);border-radius:0 0 4px 4px;"></div><div class="t" style="left:172.32px;width:23.86px;text-align:center;top:611.3px;height:18px;line-height:18px;font-size:15px;color:#5d8fe0;-webkit-text-stroke:0.25px #5d8fe0;">3</div><div class="t" style="left:172.32px;width:23.86px;text-align:center;top:630.0px;height:18px;line-height:18px;font-size:15px;color:#6cc46a;-webkit-text-stroke:0.25px #6cc46a;">3</div><div class="t" style="left:172.32px;width:23.86px;text-align:center;top:648.7px;height:18px;line-height:18px;font-size:15px;color:#e0555c;-webkit-text-stroke:0.25px #e0555c;">2</div><div style="left:196.18px;top:417.6px;width:23.86px;height:186.4px;background:#f5a443;border-right:1px solid rgba(0,0,0,0.55);border-radius:4px 4px 0 0;"></div><div style="left:196.18px;top:677px;width:23.86px;height:186.6px;background:#f5a443;border-right:1px solid rgba(0,0,0,0.55);border-radius:0 0 4px 4px;"></div><div class="t" style="left:196.18px;width:23.86px;text-align:center;top:611.3px;height:18px;line-height:18px;font-size:15px;color:#e0555c;-webkit-text-stroke:0.25px #e0555c;">3</div><div class="t" style="left:196.18px;width:23.86px;text-align:center;top:630.0px;height:18px;line-height:18px;font-size:15px;color:#5d8fe0;-webkit-text-stroke:0.25px #5d8fe0;">3</div><div class="t" style="left:196.18px;width:23.86px;text-align:center;top:648.7px;height:18px;line-height:18px;font-size:15px;color:#6cc46a;-webkit-text-stroke:0.25px #6cc46a;">3</div><div style="left:220.03px;top:413.8px;width:23.86px;height:190.2px;background:#aec85c;border-right:1px solid rgba(0,0,0,0.55);border-radius:4px 4px 0 0;"></div><div style="left:220.03px;top:677px;width:23.86px;height:182.8px;background:#eb6a40;border-right:1px solid rgba(0,0,0,0.55);border-radius:0 0 4px 4px;"></div><div class="t" style="left:220.03px;width:23.86px;text-align:center;top:611.3px;height:18px;line-height:18px;font-size:15px;color:#e0555c;-webkit-text-stroke:0.25px #e0555c;">4</div><div class="t" style="left:220.03px;width:23.86px;text-align:center;top:630.0px;height:18px;line-height:18px;font-size:15px;color:#e0555c;-webkit-text-stroke:0.25px #e0555c;">2</div><div class="t" style="left:220.03px;width:23.86px;text-align:center;top:648.7px;height:18px;line-height:18px;font-size:15px;color:#5d8fe0;-webkit-text-stroke:0.25px #5d8fe0;">2</div><div style="left:243.89px;top:411.8px;width:23.86px;height:192.2px;background:#aec85c;border-right:1px solid rgba(0,0,0,0.55);border-radius:4px 4px 0 0;"></div><div style="left:243.89px;top:677px;width:23.86px;height:180.8px;background:#eb6a40;border-right:1px solid rgba(0,0,0,0.55);border-radius:0 0 4px 4px;"></div><div class="t" style="left:243.89px;width:23.86px;text-align:center;top:611.3px;height:18px;line-height:18px;font-size:15px;color:#e0555c;-webkit-text-stroke:0.25px #e0555c;">4</div><div class="t" style="left:243.89px;width:23.86px;text-align:center;top:630.0px;height:18px;line-height:18px;font-size:15px;color:#5d8fe0;-webkit-text-stroke:0.25px #5d8fe0;">2</div><div class="t" style="left:243.89px;width:23.86px;text-align:center;top:648.7px;height:18px;line-height:18px;font-size:15px;color:#6cc46a;-webkit-text-stroke:0.25px #6cc46a;">2</div><div style="left:267.74px;top:406.7px;width:23.86px;height:197.3px;background:#74dc68;border-right:1px solid rgba(0,0,0,0.55);border-radius:4px 4px 0 0;"></div><div style="left:267.74px;top:677px;width:23.86px;height:175.7px;background:#dd2b3d;border-right:1px solid rgba(0,0,0,0.55);border-radius:0 0 4px 4px;"></div><div class="t" style="left:267.74px;width:23.86px;text-align:center;top:611.3px;height:18px;line-height:18px;font-size:15px;color:#e0555c;-webkit-text-stroke:0.25px #e0555c;opacity:0.75;">4</div><div class="t" style="left:267.74px;width:23.86px;text-align:center;top:630.0px;height:18px;line-height:18px;font-size:15px;color:#e0555c;-webkit-text-stroke:0.25px #e0555c;opacity:0.75;">3</div><div class="t" style="left:267.74px;width:23.86px;text-align:center;top:648.7px;height:18px;line-height:18px;font-size:15px;color:#e0555c;-webkit-text-stroke:0.25px #e0555c;opacity:0.75;">2</div><div style="left:291.60px;top:410.0px;width:23.86px;height:194.0px;background:#aec85c;border-right:1px solid rgba(0,0,0,0.55);border-radius:4px 4px 0 0;"></div><div style="left:291.60px;top:677px;width:23.86px;height:179.0px;background:#eb6a40;border-right:1px solid rgba(0,0,0,0.55);border-radius:0 0 4px 4px;"></div><div class="t" style="left:291.60px;width:23.86px;text-align:center;top:611.3px;height:18px;line-height:18px;font-size:15px;color:#e0555c;-webkit-text-stroke:0.25px #e0555c;">4</div><div class="t" style="left:291.60px;width:23.86px;text-align:center;top:630.0px;height:18px;line-height:18px;font-size:15px;color:#e0555c;-webkit-text-stroke:0.25px #e0555c;">3</div><div class="t" style="left:291.60px;width:23.86px;text-align:center;top:648.7px;height:18px;line-height:18px;font-size:15px;color:#5d8fe0;-webkit-text-stroke:0.25px #5d8fe0;">2</div><div style="left:315.45px;top:410.0px;width:23.86px;height:194.0px;background:#aec85c;border-right:1px solid rgba(0,0,0,0.55);border-radius:4px 4px 0 0;"></div><div style="left:315.45px;top:677px;width:23.86px;height:179.0px;background:#eb6a40;border-right:1px solid rgba(0,0,0,0.55);border-radius:0 0 4px 4px;"></div><div class="t" style="left:315.45px;width:23.86px;text-align:center;top:611.3px;height:18px;line-height:18px;font-size:15px;color:#e0555c;-webkit-text-stroke:0.25px #e0555c;">4</div><div class="t" style="left:315.45px;width:23.86px;text-align:center;top:630.0px;height:18px;line-height:18px;font-size:15px;color:#5d8fe0;-webkit-text-stroke:0.25px #5d8fe0;">3</div><div class="t" style="left:315.45px;width:23.86px;text-align:center;top:648.7px;height:18px;line-height:18px;font-size:15px;color:#e0555c;-webkit-text-stroke:0.25px #e0555c;">2</div><div style="left:339.31px;top:410.0px;width:23.86px;height:194.0px;background:#aec85c;border-right:1px solid rgba(0,0,0,0.55);border-radius:4px 4px 0 0;"></div><div style="left:339.31px;top:677px;width:23.86px;height:179.0px;background:#eb6a40;border-right:1px solid rgba(0,0,0,0.55);border-radius:0 0 4px 4px;"></div><div class="t" style="left:339.31px;width:23.86px;text-align:center;top:611.3px;height:18px;line-height:18px;font-size:15px;color:#5d8fe0;-webkit-text-stroke:0.25px #5d8fe0;">4</div><div class="t" style="left:339.31px;width:23.86px;text-align:center;top:630.0px;height:18px;line-height:18px;font-size:15px;color:#e0555c;-webkit-text-stroke:0.25px #e0555c;">3</div><div class="t" style="left:339.31px;width:23.86px;text-align:center;top:648.7px;height:18px;line-height:18px;font-size:15px;color:#e0555c;-webkit-text-stroke:0.25px #e0555c;">2</div><div style="left:363.16px;top:411.8px;width:23.86px;height:192.2px;background:#aec85c;border-right:1px solid rgba(0,0,0,0.55);border-radius:4px 4px 0 0;"></div><div style="left:363.16px;top:677px;width:23.86px;height:180.8px;background:#eb6a40;border-right:1px solid rgba(0,0,0,0.55);border-radius:0 0 4px 4px;"></div><div class="t" style="left:363.16px;width:23.86px;text-align:center;top:611.3px;height:18px;line-height:18px;font-size:15px;color:#e0555c;-webkit-text-stroke:0.25px #e0555c;">4</div><div class="t" style="left:363.16px;width:23.86px;text-align:center;top:630.0px;height:18px;line-height:18px;font-size:15px;color:#5d8fe0;-webkit-text-stroke:0.25px #5d8fe0;">3</div><div class="t" style="left:363.16px;width:23.86px;text-align:center;top:648.7px;height:18px;line-height:18px;font-size:15px;color:#6cc46a;-webkit-text-stroke:0.25px #6cc46a;">2</div><div style="left:387.01px;top:414.7px;width:23.86px;height:189.3px;background:#aec85c;border-right:1px solid rgba(0,0,0,0.55);border-radius:4px 4px 0 0;"></div><div style="left:387.01px;top:677px;width:23.86px;height:183.7px;background:#eb6a40;border-right:1px solid rgba(0,0,0,0.55);border-radius:0 0 4px 4px;"></div><div class="t" style="left:387.01px;width:23.86px;text-align:center;top:611.3px;height:18px;line-height:18px;font-size:15px;color:#e0555c;-webkit-text-stroke:0.25px #e0555c;">4</div><div class="t" style="left:387.01px;width:23.86px;text-align:center;top:630.0px;height:18px;line-height:18px;font-size:15px;color:#e0555c;-webkit-text-stroke:0.25px #e0555c;">3</div><div class="t" style="left:387.01px;width:23.86px;text-align:center;top:648.7px;height:18px;line-height:18px;font-size:15px;color:#5d8fe0;-webkit-text-stroke:0.25px #5d8fe0;">3</div><div style="left:410.87px;top:413.8px;width:23.86px;height:190.2px;background:#aec85c;border-right:1px solid rgba(0,0,0,0.55);border-radius:4px 4px 0 0;"></div><div style="left:410.87px;top:677px;width:23.86px;height:182.8px;background:#eb6a40;border-right:1px solid rgba(0,0,0,0.55);border-radius:0 0 4px 4px;"></div><div class="t" style="left:410.87px;width:23.86px;text-align:center;top:611.3px;height:18px;line-height:18px;font-size:15px;color:#e0555c;-webkit-text-stroke:0.25px #e0555c;">4</div><div class="t" style="left:410.87px;width:23.86px;text-align:center;top:630.0px;height:18px;line-height:18px;font-size:15px;color:#5d8fe0;-webkit-text-stroke:0.25px #5d8fe0;">3</div><div class="t" style="left:410.87px;width:23.86px;text-align:center;top:648.7px;height:18px;line-height:18px;font-size:15px;color:#6cc46a;-webkit-text-stroke:0.25px #6cc46a;">3</div><div style="left:434.73px;top:415.8px;width:23.86px;height:188.2px;background:#aec85c;border-right:1px solid rgba(0,0,0,0.55);border-radius:4px 4px 0 0;"></div><div style="left:434.73px;top:677px;width:23.86px;height:184.8px;background:#eb6a40;border-right:1px solid rgba(0,0,0,0.55);border-radius:0 0 4px 4px;"></div><div class="t" style="left:434.73px;width:23.86px;text-align:center;top:611.3px;height:18px;line-height:18px;font-size:15px;color:#e0555c;-webkit-text-stroke:0.25px #e0555c;">4</div><div class="t" style="left:434.73px;width:23.86px;text-align:center;top:630.0px;height:18px;line-height:18px;font-size:15px;color:#5d8fe0;-webkit-text-stroke:0.25px #5d8fe0;">4</div><div class="t" style="left:434.73px;width:23.86px;text-align:center;top:648.7px;height:18px;line-height:18px;font-size:15px;color:#e0555c;-webkit-text-stroke:0.25px #e0555c;">2</div><div style="left:458.58px;top:414.7px;width:23.86px;height:189.3px;background:#aec85c;border-right:1px solid rgba(0,0,0,0.55);border-radius:4px 4px 0 0;"></div><div style="left:458.58px;top:677px;width:23.86px;height:183.7px;background:#eb6a40;border-right:1px solid rgba(0,0,0,0.55);border-radius:0 0 4px 4px;"></div><div class="t" style="left:458.58px;width:23.86px;text-align:center;top:611.3px;height:18px;line-height:18px;font-size:15px;color:#5d8fe0;-webkit-text-stroke:0.25px #5d8fe0;">4</div><div class="t" style="left:458.58px;width:23.86px;text-align:center;top:630.0px;height:18px;line-height:18px;font-size:15px;color:#6cc46a;-webkit-text-stroke:0.25px #6cc46a;">4</div><div class="t" style="left:458.58px;width:23.86px;text-align:center;top:648.7px;height:18px;line-height:18px;font-size:15px;color:#e0555c;-webkit-text-stroke:0.25px #e0555c;">2</div><div style="left:482.44px;top:414.7px;width:23.86px;height:189.3px;background:#aec85c;border-right:1px solid rgba(0,0,0,0.55);border-radius:4px 4px 0 0;"></div><div style="left:482.44px;top:677px;width:23.86px;height:183.7px;background:#eb6a40;border-right:1px solid rgba(0,0,0,0.55);border-radius:0 0 4px 4px;"></div><div class="t" style="left:482.44px;width:23.86px;text-align:center;top:611.3px;height:18px;line-height:18px;font-size:15px;color:#e0555c;-webkit-text-stroke:0.25px #e0555c;">4</div><div class="t" style="left:482.44px;width:23.86px;text-align:center;top:630.0px;height:18px;line-height:18px;font-size:15px;color:#5d8fe0;-webkit-text-stroke:0.25px #5d8fe0;">4</div><div class="t" style="left:482.44px;width:23.86px;text-align:center;top:648.7px;height:18px;line-height:18px;font-size:15px;color:#e0555c;-webkit-text-stroke:0.25px #e0555c;">3</div><div style="left:506.29px;top:413.8px;width:23.86px;height:190.2px;background:#aec85c;border-right:1px solid rgba(0,0,0,0.55);border-radius:4px 4px 0 0;"></div><div style="left:506.29px;top:677px;width:23.86px;height:182.8px;background:#eb6a40;border-right:1px solid rgba(0,0,0,0.55);border-radius:0 0 4px 4px;"></div><div class="t" style="left:506.29px;width:23.86px;text-align:center;top:611.3px;height:18px;line-height:18px;font-size:15px;color:#5d8fe0;-webkit-text-stroke:0.25px #5d8fe0;">4</div><div class="t" style="left:506.29px;width:23.86px;text-align:center;top:630.0px;height:18px;line-height:18px;font-size:15px;color:#6cc46a;-webkit-text-stroke:0.25px #6cc46a;">4</div><div class="t" style="left:506.29px;width:23.86px;text-align:center;top:648.7px;height:18px;line-height:18px;font-size:15px;color:#e0555c;-webkit-text-stroke:0.25px #e0555c;">3</div><div style="left:530.14px;top:417.6px;width:23.86px;height:186.4px;background:#f5a443;border-right:1px solid rgba(0,0,0,0.55);border-radius:4px 4px 0 0;"></div><div style="left:530.14px;top:677px;width:23.86px;height:186.6px;background:#f5a443;border-right:1px solid rgba(0,0,0,0.55);border-radius:0 0 4px 4px;"></div><div class="t" style="left:530.14px;width:23.86px;text-align:center;top:611.3px;height:18px;line-height:18px;font-size:15px;color:#e0555c;-webkit-text-stroke:0.25px #e0555c;">4</div><div class="t" style="left:530.14px;width:23.86px;text-align:center;top:630.0px;height:18px;line-height:18px;font-size:15px;color:#5d8fe0;-webkit-text-stroke:0.25px #5d8fe0;">4</div><div class="t" style="left:530.14px;width:23.86px;text-align:center;top:648.7px;height:18px;line-height:18px;font-size:15px;color:#6cc46a;-webkit-text-stroke:0.25px #6cc46a;">4</div><div style="left:554.00px;top:413.8px;width:23.86px;height:190.2px;background:#aec85c;border-right:1px solid rgba(0,0,0,0.55);border-radius:4px 4px 0 0;"></div><div style="left:554.00px;top:677px;width:23.86px;height:182.8px;background:#eb6a40;border-right:1px solid rgba(0,0,0,0.55);border-radius:0 0 4px 4px;"></div><div class="t" style="left:554.00px;width:23.86px;text-align:center;top:611.3px;height:18px;line-height:18px;font-size:15px;color:#e0555c;-webkit-text-stroke:0.25px #e0555c;">5</div><div class="t" style="left:554.00px;width:23.86px;text-align:center;top:630.0px;height:18px;line-height:18px;font-size:15px;color:#e0555c;-webkit-text-stroke:0.25px #e0555c;">2</div><div class="t" style="left:554.00px;width:23.86px;text-align:center;top:648.7px;height:18px;line-height:18px;font-size:15px;color:#5d8fe0;-webkit-text-stroke:0.25px #5d8fe0;">2</div><div style="left:577.86px;top:411.8px;width:23.86px;height:192.2px;background:#aec85c;border-right:1px solid rgba(0,0,0,0.55);border-radius:4px 4px 0 0;"></div><div style="left:577.86px;top:677px;width:23.86px;height:180.8px;background:#eb6a40;border-right:1px solid rgba(0,0,0,0.55);border-radius:0 0 4px 4px;"></div><div class="t" style="left:577.86px;width:23.86px;text-align:center;top:611.3px;height:18px;line-height:18px;font-size:15px;color:#e0555c;-webkit-text-stroke:0.25px #e0555c;">5</div><div class="t" style="left:577.86px;width:23.86px;text-align:center;top:630.0px;height:18px;line-height:18px;font-size:15px;color:#5d8fe0;-webkit-text-stroke:0.25px #5d8fe0;">2</div><div class="t" style="left:577.86px;width:23.86px;text-align:center;top:648.7px;height:18px;line-height:18px;font-size:15px;color:#6cc46a;-webkit-text-stroke:0.25px #6cc46a;">2</div><div style="left:601.71px;top:407.8px;width:23.86px;height:196.2px;background:#74dc68;border-right:1px solid rgba(0,0,0,0.55);border-radius:4px 4px 0 0;"></div><div style="left:601.71px;top:677px;width:23.86px;height:176.8px;background:#dd2b3d;border-right:1px solid rgba(0,0,0,0.55);border-radius:0 0 4px 4px;"></div><div class="t" style="left:601.71px;width:23.86px;text-align:center;top:611.3px;height:18px;line-height:18px;font-size:15px;color:#e0555c;-webkit-text-stroke:0.25px #e0555c;">5</div><div class="t" style="left:601.71px;width:23.86px;text-align:center;top:630.0px;height:18px;line-height:18px;font-size:15px;color:#e0555c;-webkit-text-stroke:0.25px #e0555c;">3</div><div class="t" style="left:601.71px;width:23.86px;text-align:center;top:648.7px;height:18px;line-height:18px;font-size:15px;color:#e0555c;-webkit-text-stroke:0.25px #e0555c;">2</div><div style="left:625.56px;top:409.0px;width:23.86px;height:195.0px;background:#aec85c;border-right:1px solid rgba(0,0,0,0.55);border-radius:4px 4px 0 0;"></div><div style="left:625.56px;top:677px;width:23.86px;height:178.0px;background:#eb6a40;border-right:1px solid rgba(0,0,0,0.55);border-radius:0 0 4px 4px;"></div><div class="t" style="left:625.56px;width:23.86px;text-align:center;top:611.3px;height:18px;line-height:18px;font-size:15px;color:#5d8fe0;-webkit-text-stroke:0.25px #5d8fe0;">5</div><div class="t" style="left:625.56px;width:23.86px;text-align:center;top:630.0px;height:18px;line-height:18px;font-size:15px;color:#e0555c;-webkit-text-stroke:0.25px #e0555c;">3</div><div class="t" style="left:625.56px;width:23.86px;text-align:center;top:648.7px;height:18px;line-height:18px;font-size:15px;color:#e0555c;-webkit-text-stroke:0.25px #e0555c;">2</div><div style="left:649.42px;top:410.0px;width:23.86px;height:194.0px;background:#aec85c;border-right:1px solid rgba(0,0,0,0.55);border-radius:4px 4px 0 0;"></div><div style="left:649.42px;top:677px;width:23.86px;height:179.0px;background:#eb6a40;border-right:1px solid rgba(0,0,0,0.55);border-radius:0 0 4px 4px;"></div><div class="t" style="left:649.42px;width:23.86px;text-align:center;top:611.3px;height:18px;line-height:18px;font-size:15px;color:#e0555c;-webkit-text-stroke:0.25px #e0555c;">5</div><div class="t" style="left:649.42px;width:23.86px;text-align:center;top:630.0px;height:18px;line-height:18px;font-size:15px;color:#e0555c;-webkit-text-stroke:0.25px #e0555c;">3</div><div class="t" style="left:649.42px;width:23.86px;text-align:center;top:648.7px;height:18px;line-height:18px;font-size:15px;color:#5d8fe0;-webkit-text-stroke:0.25px #5d8fe0;">2</div><div style="left:673.27px;top:410.0px;width:23.86px;height:194.0px;background:#aec85c;border-right:1px solid rgba(0,0,0,0.55);border-radius:4px 4px 0 0;"></div><div style="left:673.27px;top:677px;width:23.86px;height:179.0px;background:#eb6a40;border-right:1px solid rgba(0,0,0,0.55);border-radius:0 0 4px 4px;"></div><div class="t" style="left:673.27px;width:23.86px;text-align:center;top:611.3px;height:18px;line-height:18px;font-size:15px;color:#e0555c;-webkit-text-stroke:0.25px #e0555c;">5</div><div class="t" style="left:673.27px;width:23.86px;text-align:center;top:630.0px;height:18px;line-height:18px;font-size:15px;color:#5d8fe0;-webkit-text-stroke:0.25px #5d8fe0;">3</div><div class="t" style="left:673.27px;width:23.86px;text-align:center;top:648.7px;height:18px;line-height:18px;font-size:15px;color:#e0555c;-webkit-text-stroke:0.25px #e0555c;">2</div><div style="left:697.13px;top:410.0px;width:23.86px;height:194.0px;background:#aec85c;border-right:1px solid rgba(0,0,0,0.55);border-radius:4px 4px 0 0;"></div><div style="left:697.13px;top:677px;width:23.86px;height:179.0px;background:#eb6a40;border-right:1px solid rgba(0,0,0,0.55);border-radius:0 0 4px 4px;"></div><div class="t" style="left:697.13px;width:23.86px;text-align:center;top:611.3px;height:18px;line-height:18px;font-size:15px;color:#e0555c;-webkit-text-stroke:0.25px #e0555c;">5</div><div class="t" style="left:697.13px;width:23.86px;text-align:center;top:630.0px;height:18px;line-height:18px;font-size:15px;color:#5d8fe0;-webkit-text-stroke:0.25px #5d8fe0;">3</div><div class="t" style="left:697.13px;width:23.86px;text-align:center;top:648.7px;height:18px;line-height:18px;font-size:15px;color:#6cc46a;-webkit-text-stroke:0.25px #6cc46a;">2</div><div style="left:720.99px;top:414.7px;width:23.86px;height:189.3px;background:#aec85c;border-right:1px solid rgba(0,0,0,0.55);border-radius:4px 4px 0 0;"></div><div style="left:720.99px;top:677px;width:23.86px;height:183.7px;background:#eb6a40;border-right:1px solid rgba(0,0,0,0.55);border-radius:0 0 4px 4px;"></div><div class="t" style="left:720.99px;width:23.86px;text-align:center;top:611.3px;height:18px;line-height:18px;font-size:15px;color:#e0555c;-webkit-text-stroke:0.25px #e0555c;">5</div><div class="t" style="left:720.99px;width:23.86px;text-align:center;top:630.0px;height:18px;line-height:18px;font-size:15px;color:#e0555c;-webkit-text-stroke:0.25px #e0555c;">3</div><div class="t" style="left:720.99px;width:23.86px;text-align:center;top:648.7px;height:18px;line-height:18px;font-size:15px;color:#5d8fe0;-webkit-text-stroke:0.25px #5d8fe0;">3</div><div style="left:744.84px;top:413.8px;width:23.86px;height:190.2px;background:#aec85c;border-right:1px solid rgba(0,0,0,0.55);border-radius:4px 4px 0 0;"></div><div style="left:744.84px;top:677px;width:23.86px;height:182.8px;background:#eb6a40;border-right:1px solid rgba(0,0,0,0.55);border-radius:0 0 4px 4px;"></div><div class="t" style="left:744.84px;width:23.86px;text-align:center;top:611.3px;height:18px;line-height:18px;font-size:15px;color:#e0555c;-webkit-text-stroke:0.25px #e0555c;">5</div><div class="t" style="left:744.84px;width:23.86px;text-align:center;top:630.0px;height:18px;line-height:18px;font-size:15px;color:#5d8fe0;-webkit-text-stroke:0.25px #5d8fe0;">3</div><div class="t" style="left:744.84px;width:23.86px;text-align:center;top:648.7px;height:18px;line-height:18px;font-size:15px;color:#6cc46a;-webkit-text-stroke:0.25px #6cc46a;">3</div><div style="left:768.69px;top:406.7px;width:23.86px;height:197.3px;background:#74dc68;border-right:1px solid rgba(0,0,0,0.55);border-radius:4px 4px 0 0;"></div><div style="left:768.69px;top:677px;width:23.86px;height:175.7px;background:#dd2b3d;border-right:1px solid rgba(0,0,0,0.55);border-radius:0 0 4px 4px;"></div><div class="t" style="left:768.69px;width:23.86px;text-align:center;top:611.3px;height:18px;line-height:18px;font-size:15px;color:#e0555c;-webkit-text-stroke:0.25px #e0555c;">5</div><div class="t" style="left:768.69px;width:23.86px;text-align:center;top:630.0px;height:18px;line-height:18px;font-size:15px;color:#e0555c;-webkit-text-stroke:0.25px #e0555c;">4</div><div class="t" style="left:768.69px;width:23.86px;text-align:center;top:648.7px;height:18px;line-height:18px;font-size:15px;color:#e0555c;-webkit-text-stroke:0.25px #e0555c;">2</div><div style="left:792.55px;top:413.0px;width:23.86px;height:191.0px;background:#aec85c;border-right:1px solid rgba(0,0,0,0.55);border-radius:4px 4px 0 0;"></div><div style="left:792.55px;top:677px;width:23.86px;height:182.0px;background:#eb6a40;border-right:1px solid rgba(0,0,0,0.55);border-radius:0 0 4px 4px;"></div><div class="t" style="left:792.55px;width:23.86px;text-align:center;top:611.3px;height:18px;line-height:18px;font-size:15px;color:#e0555c;-webkit-text-stroke:0.25px #e0555c;">5</div><div class="t" style="left:792.55px;width:23.86px;text-align:center;top:630.0px;height:18px;line-height:18px;font-size:15px;color:#e0555c;-webkit-text-stroke:0.25px #e0555c;">4</div><div class="t" style="left:792.55px;width:23.86px;text-align:center;top:648.7px;height:18px;line-height:18px;font-size:15px;color:#5d8fe0;-webkit-text-stroke:0.25px #5d8fe0;">2</div><div style="left:816.40px;top:413.0px;width:23.86px;height:191.0px;background:#aec85c;border-right:1px solid rgba(0,0,0,0.55);border-radius:4px 4px 0 0;"></div><div style="left:816.40px;top:677px;width:23.86px;height:182.0px;background:#eb6a40;border-right:1px solid rgba(0,0,0,0.55);border-radius:0 0 4px 4px;"></div><div class="t" style="left:816.40px;width:23.86px;text-align:center;top:611.3px;height:18px;line-height:18px;font-size:15px;color:#e0555c;-webkit-text-stroke:0.25px #e0555c;">5</div><div class="t" style="left:816.40px;width:23.86px;text-align:center;top:630.0px;height:18px;line-height:18px;font-size:15px;color:#5d8fe0;-webkit-text-stroke:0.25px #5d8fe0;">4</div><div class="t" style="left:816.40px;width:23.86px;text-align:center;top:648.7px;height:18px;line-height:18px;font-size:15px;color:#e0555c;-webkit-text-stroke:0.25px #e0555c;">2</div><div style="left:840.26px;top:411.8px;width:23.86px;height:192.2px;background:#aec85c;border-right:1px solid rgba(0,0,0,0.55);border-radius:4px 4px 0 0;"></div><div style="left:840.26px;top:677px;width:23.86px;height:180.8px;background:#eb6a40;border-right:1px solid rgba(0,0,0,0.55);border-radius:0 0 4px 4px;"></div><div class="t" style="left:840.26px;width:23.86px;text-align:center;top:611.3px;height:18px;line-height:18px;font-size:15px;color:#5d8fe0;-webkit-text-stroke:0.25px #5d8fe0;">5</div><div class="t" style="left:840.26px;width:23.86px;text-align:center;top:630.0px;height:18px;line-height:18px;font-size:15px;color:#e0555c;-webkit-text-stroke:0.25px #e0555c;">4</div><div class="t" style="left:840.26px;width:23.86px;text-align:center;top:648.7px;height:18px;line-height:18px;font-size:15px;color:#e0555c;-webkit-text-stroke:0.25px #e0555c;">2</div><div style="left:864.12px;top:414.7px;width:23.86px;height:189.3px;background:#aec85c;border-right:1px solid rgba(0,0,0,0.55);border-radius:4px 4px 0 0;"></div><div style="left:864.12px;top:677px;width:23.86px;height:183.7px;background:#eb6a40;border-right:1px solid rgba(0,0,0,0.55);border-radius:0 0 4px 4px;"></div><div class="t" style="left:864.12px;width:23.86px;text-align:center;top:611.3px;height:18px;line-height:18px;font-size:15px;color:#e0555c;-webkit-text-stroke:0.25px #e0555c;">5</div><div class="t" style="left:864.12px;width:23.86px;text-align:center;top:630.0px;height:18px;line-height:18px;font-size:15px;color:#5d8fe0;-webkit-text-stroke:0.25px #5d8fe0;">4</div><div class="t" style="left:864.12px;width:23.86px;text-align:center;top:648.7px;height:18px;line-height:18px;font-size:15px;color:#6cc46a;-webkit-text-stroke:0.25px #6cc46a;">2</div><div style="left:887.97px;top:404.9px;width:23.86px;height:199.1px;background:#74dc68;border-right:1px solid rgba(0,0,0,0.55);border-radius:4px 4px 0 0;"></div><div style="left:887.97px;top:677px;width:23.86px;height:173.9px;background:#dd2b3d;border-right:1px solid rgba(0,0,0,0.55);border-radius:0 0 4px 4px;"></div><div class="t" style="left:887.97px;width:23.86px;text-align:center;top:611.3px;height:18px;line-height:18px;font-size:15px;color:#e0555c;-webkit-text-stroke:0.25px #e0555c;">5</div><div class="t" style="left:887.97px;width:23.86px;text-align:center;top:630.0px;height:18px;line-height:18px;font-size:15px;color:#e0555c;-webkit-text-stroke:0.25px #e0555c;">4</div><div class="t" style="left:887.97px;width:23.86px;text-align:center;top:648.7px;height:18px;line-height:18px;font-size:15px;color:#e0555c;-webkit-text-stroke:0.25px #e0555c;">3</div><div style="left:911.83px;top:410.0px;width:23.86px;height:194.0px;background:#aec85c;border-right:1px solid rgba(0,0,0,0.55);border-radius:4px 4px 0 0;"></div><div style="left:911.83px;top:677px;width:23.86px;height:179.0px;background:#eb6a40;border-right:1px solid rgba(0,0,0,0.55);border-radius:0 0 4px 4px;"></div><div class="t" style="left:911.83px;width:23.86px;text-align:center;top:611.3px;height:18px;line-height:18px;font-size:15px;color:#5d8fe0;-webkit-text-stroke:0.25px #5d8fe0;">5</div><div class="t" style="left:911.83px;width:23.86px;text-align:center;top:630.0px;height:18px;line-height:18px;font-size:15px;color:#e0555c;-webkit-text-stroke:0.25px #e0555c;">4</div><div class="t" style="left:911.83px;width:23.86px;text-align:center;top:648.7px;height:18px;line-height:18px;font-size:15px;color:#e0555c;-webkit-text-stroke:0.25px #e0555c;">3</div><div style="left:935.68px;top:410.7px;width:23.86px;height:193.3px;background:#aec85c;border-right:1px solid rgba(0,0,0,0.55);border-radius:4px 4px 0 0;"></div><div style="left:935.68px;top:677px;width:23.86px;height:179.7px;background:#eb6a40;border-right:1px solid rgba(0,0,0,0.55);border-radius:0 0 4px 4px;"></div><div class="t" style="left:935.68px;width:23.86px;text-align:center;top:611.3px;height:18px;line-height:18px;font-size:15px;color:#e0555c;-webkit-text-stroke:0.25px #e0555c;">5</div><div class="t" style="left:935.68px;width:23.86px;text-align:center;top:630.0px;height:18px;line-height:18px;font-size:15px;color:#e0555c;-webkit-text-stroke:0.25px #e0555c;">4</div><div class="t" style="left:935.68px;width:23.86px;text-align:center;top:648.7px;height:18px;line-height:18px;font-size:15px;color:#5d8fe0;-webkit-text-stroke:0.25px #5d8fe0;">3</div><div style="left:959.53px;top:410.7px;width:23.86px;height:193.3px;background:#aec85c;border-right:1px solid rgba(0,0,0,0.55);border-radius:4px 4px 0 0;"></div><div style="left:959.53px;top:677px;width:23.86px;height:179.7px;background:#eb6a40;border-right:1px solid rgba(0,0,0,0.55);border-radius:0 0 4px 4px;"></div><div class="t" style="left:959.53px;width:23.86px;text-align:center;top:611.3px;height:18px;line-height:18px;font-size:15px;color:#e0555c;-webkit-text-stroke:0.25px #e0555c;">5</div><div class="t" style="left:959.53px;width:23.86px;text-align:center;top:630.0px;height:18px;line-height:18px;font-size:15px;color:#5d8fe0;-webkit-text-stroke:0.25px #5d8fe0;">4</div><div class="t" style="left:959.53px;width:23.86px;text-align:center;top:648.7px;height:18px;line-height:18px;font-size:15px;color:#e0555c;-webkit-text-stroke:0.25px #e0555c;">3</div><div style="left:983.39px;top:411.8px;width:23.86px;height:192.2px;background:#aec85c;border-right:1px solid rgba(0,0,0,0.55);border-radius:4px 4px 0 0;"></div><div style="left:983.39px;top:677px;width:23.86px;height:180.8px;background:#eb6a40;border-right:1px solid rgba(0,0,0,0.55);border-radius:0 0 4px 4px;"></div><div class="t" style="left:983.39px;width:23.86px;text-align:center;top:611.3px;height:18px;line-height:18px;font-size:15px;color:#e0555c;-webkit-text-stroke:0.25px #e0555c;">5</div><div class="t" style="left:983.39px;width:23.86px;text-align:center;top:630.0px;height:18px;line-height:18px;font-size:15px;color:#5d8fe0;-webkit-text-stroke:0.25px #5d8fe0;">4</div><div class="t" style="left:983.39px;width:23.86px;text-align:center;top:648.7px;height:18px;line-height:18px;font-size:15px;color:#6cc46a;-webkit-text-stroke:0.25px #6cc46a;">3</div><div style="left:1007.25px;top:413.8px;width:23.86px;height:190.2px;background:#aec85c;border-right:1px solid rgba(0,0,0,0.55);border-radius:4px 4px 0 0;"></div><div style="left:1007.25px;top:677px;width:23.86px;height:182.8px;background:#eb6a40;border-right:1px solid rgba(0,0,0,0.55);border-radius:0 0 4px 4px;"></div><div class="t" style="left:1007.25px;width:23.86px;text-align:center;top:611.3px;height:18px;line-height:18px;font-size:15px;color:#e0555c;-webkit-text-stroke:0.25px #e0555c;">5</div><div class="t" style="left:1007.25px;width:23.86px;text-align:center;top:630.0px;height:18px;line-height:18px;font-size:15px;color:#e0555c;-webkit-text-stroke:0.25px #e0555c;">4</div><div class="t" style="left:1007.25px;width:23.86px;text-align:center;top:648.7px;height:18px;line-height:18px;font-size:15px;color:#5d8fe0;-webkit-text-stroke:0.25px #5d8fe0;">4</div><div style="left:1031.10px;top:414.7px;width:23.86px;height:189.3px;background:#aec85c;border-right:1px solid rgba(0,0,0,0.55);border-radius:4px 4px 0 0;"></div><div style="left:1031.10px;top:677px;width:23.86px;height:183.7px;background:#eb6a40;border-right:1px solid rgba(0,0,0,0.55);border-radius:0 0 4px 4px;"></div><div class="t" style="left:1031.10px;width:23.86px;text-align:center;top:611.3px;height:18px;line-height:18px;font-size:15px;color:#e0555c;-webkit-text-stroke:0.25px #e0555c;">5</div><div class="t" style="left:1031.10px;width:23.86px;text-align:center;top:630.0px;height:18px;line-height:18px;font-size:15px;color:#5d8fe0;-webkit-text-stroke:0.25px #5d8fe0;">4</div><div class="t" style="left:1031.10px;width:23.86px;text-align:center;top:648.7px;height:18px;line-height:18px;font-size:15px;color:#6cc46a;-webkit-text-stroke:0.25px #6cc46a;">4</div><div style="left:1054.96px;top:417.6px;width:23.86px;height:186.4px;background:#f5a443;border-right:1px solid rgba(0,0,0,0.55);border-radius:4px 4px 0 0;"></div><div style="left:1054.96px;top:677px;width:23.86px;height:186.6px;background:#f5a443;border-right:1px solid rgba(0,0,0,0.55);border-radius:0 0 4px 4px;"></div><div class="t" style="left:1054.96px;width:23.86px;text-align:center;top:611.3px;height:18px;line-height:18px;font-size:15px;color:#e0555c;-webkit-text-stroke:0.25px #e0555c;">5</div><div class="t" style="left:1054.96px;width:23.86px;text-align:center;top:630.0px;height:18px;line-height:18px;font-size:15px;color:#5d8fe0;-webkit-text-stroke:0.25px #5d8fe0;">5</div><div class="t" style="left:1054.96px;width:23.86px;text-align:center;top:648.7px;height:18px;line-height:18px;font-size:15px;color:#e0555c;-webkit-text-stroke:0.25px #e0555c;">2</div><div style="left:1078.81px;top:416.7px;width:23.86px;height:187.3px;background:#f5a443;border-right:1px solid rgba(0,0,0,0.55);border-radius:4px 4px 0 0;"></div><div style="left:1078.81px;top:677px;width:23.86px;height:185.7px;background:#f5a443;border-right:1px solid rgba(0,0,0,0.55);border-radius:0 0 4px 4px;"></div><div class="t" style="left:1078.81px;width:23.86px;text-align:center;top:611.3px;height:18px;line-height:18px;font-size:15px;color:#5d8fe0;-webkit-text-stroke:0.25px #5d8fe0;">5</div><div class="t" style="left:1078.81px;width:23.86px;text-align:center;top:630.0px;height:18px;line-height:18px;font-size:15px;color:#6cc46a;-webkit-text-stroke:0.25px #6cc46a;">5</div><div class="t" style="left:1078.81px;width:23.86px;text-align:center;top:648.7px;height:18px;line-height:18px;font-size:15px;color:#e0555c;-webkit-text-stroke:0.25px #e0555c;">2</div><div style="left:1102.67px;top:416.7px;width:23.86px;height:187.3px;background:#f5a443;border-right:1px solid rgba(0,0,0,0.55);border-radius:4px 4px 0 0;"></div><div style="left:1102.67px;top:677px;width:23.86px;height:185.7px;background:#f5a443;border-right:1px solid rgba(0,0,0,0.55);border-radius:0 0 4px 4px;"></div><div class="t" style="left:1102.67px;width:23.86px;text-align:center;top:611.3px;height:18px;line-height:18px;font-size:15px;color:#e0555c;-webkit-text-stroke:0.25px #e0555c;">5</div><div class="t" style="left:1102.67px;width:23.86px;text-align:center;top:630.0px;height:18px;line-height:18px;font-size:15px;color:#5d8fe0;-webkit-text-stroke:0.25px #5d8fe0;">5</div><div class="t" style="left:1102.67px;width:23.86px;text-align:center;top:648.7px;height:18px;line-height:18px;font-size:15px;color:#e0555c;-webkit-text-stroke:0.25px #e0555c;">3</div><div style="left:1126.52px;top:415.8px;width:23.86px;height:188.2px;background:#f5a443;border-right:1px solid rgba(0,0,0,0.55);border-radius:4px 4px 0 0;"></div><div style="left:1126.52px;top:677px;width:23.86px;height:184.8px;background:#f5a443;border-right:1px solid rgba(0,0,0,0.55);border-radius:0 0 4px 4px;"></div><div class="t" style="left:1126.52px;width:23.86px;text-align:center;top:611.3px;height:18px;line-height:18px;font-size:15px;color:#5d8fe0;-webkit-text-stroke:0.25px #5d8fe0;">5</div><div class="t" style="left:1126.52px;width:23.86px;text-align:center;top:630.0px;height:18px;line-height:18px;font-size:15px;color:#6cc46a;-webkit-text-stroke:0.25px #6cc46a;">5</div><div class="t" style="left:1126.52px;width:23.86px;text-align:center;top:648.7px;height:18px;line-height:18px;font-size:15px;color:#e0555c;-webkit-text-stroke:0.25px #e0555c;">3</div><div style="left:1150.38px;top:414.7px;width:23.86px;height:189.3px;background:#aec85c;border-right:1px solid rgba(0,0,0,0.55);border-radius:4px 4px 0 0;"></div><div style="left:1150.38px;top:677px;width:23.86px;height:183.7px;background:#eb6a40;border-right:1px solid rgba(0,0,0,0.55);border-radius:0 0 4px 4px;"></div><div class="t" style="left:1150.38px;width:23.86px;text-align:center;top:611.3px;height:18px;line-height:18px;font-size:15px;color:#e0555c;-webkit-text-stroke:0.25px #e0555c;">5</div><div class="t" style="left:1150.38px;width:23.86px;text-align:center;top:630.0px;height:18px;line-height:18px;font-size:15px;color:#5d8fe0;-webkit-text-stroke:0.25px #5d8fe0;">5</div><div class="t" style="left:1150.38px;width:23.86px;text-align:center;top:648.7px;height:18px;line-height:18px;font-size:15px;color:#e0555c;-webkit-text-stroke:0.25px #e0555c;">4</div><div style="left:1174.23px;top:415.8px;width:23.86px;height:188.2px;background:#f5a443;border-right:1px solid rgba(0,0,0,0.55);border-radius:4px 4px 0 0;"></div><div style="left:1174.23px;top:677px;width:23.86px;height:184.8px;background:#f5a443;border-right:1px solid rgba(0,0,0,0.55);border-radius:0 0 4px 4px;"></div><div class="t" style="left:1174.23px;width:23.86px;text-align:center;top:611.3px;height:18px;line-height:18px;font-size:15px;color:#5d8fe0;-webkit-text-stroke:0.25px #5d8fe0;">5</div><div class="t" style="left:1174.23px;width:23.86px;text-align:center;top:630.0px;height:18px;line-height:18px;font-size:15px;color:#6cc46a;-webkit-text-stroke:0.25px #6cc46a;">5</div><div class="t" style="left:1174.23px;width:23.86px;text-align:center;top:648.7px;height:18px;line-height:18px;font-size:15px;color:#e0555c;-webkit-text-stroke:0.25px #e0555c;">4</div><div style="left:1198.09px;top:418.7px;width:23.86px;height:185.3px;background:#f5a443;border-right:1px solid rgba(0,0,0,0.55);border-radius:4px 4px 0 0;"></div><div style="left:1198.09px;top:677px;width:23.86px;height:187.7px;background:#f5a443;border-right:1px solid rgba(0,0,0,0.55);border-radius:0 0 4px 4px;"></div><div class="t" style="left:1198.09px;width:23.86px;text-align:center;top:611.3px;height:18px;line-height:18px;font-size:15px;color:#e0555c;-webkit-text-stroke:0.25px #e0555c;">5</div><div class="t" style="left:1198.09px;width:23.86px;text-align:center;top:630.0px;height:18px;line-height:18px;font-size:15px;color:#5d8fe0;-webkit-text-stroke:0.25px #5d8fe0;">5</div><div class="t" style="left:1198.09px;width:23.86px;text-align:center;top:648.7px;height:18px;line-height:18px;font-size:15px;color:#6cc46a;-webkit-text-stroke:0.25px #6cc46a;">5</div><div style="left:1221.94px;top:411.8px;width:23.86px;height:192.2px;background:#aec85c;border-right:1px solid rgba(0,0,0,0.55);border-radius:4px 4px 0 0;"></div><div style="left:1221.94px;top:677px;width:23.86px;height:180.8px;background:#eb6a40;border-right:1px solid rgba(0,0,0,0.55);border-radius:0 0 4px 4px;"></div><div class="t" style="left:1221.94px;width:23.86px;text-align:center;top:611.3px;height:18px;line-height:18px;font-size:15px;color:#e0555c;-webkit-text-stroke:0.25px #e0555c;">6</div><div class="t" style="left:1221.94px;width:23.86px;text-align:center;top:630.0px;height:18px;line-height:18px;font-size:15px;color:#e0555c;-webkit-text-stroke:0.25px #e0555c;">2</div><div class="t" style="left:1221.94px;width:23.86px;text-align:center;top:648.7px;height:18px;line-height:18px;font-size:15px;color:#5d8fe0;-webkit-text-stroke:0.25px #5d8fe0;">2</div><div style="left:1245.80px;top:411.8px;width:23.86px;height:192.2px;background:#aec85c;border-right:1px solid rgba(0,0,0,0.55);border-radius:4px 4px 0 0;"></div><div style="left:1245.80px;top:677px;width:23.86px;height:180.8px;background:#eb6a40;border-right:1px solid rgba(0,0,0,0.55);border-radius:0 0 4px 4px;"></div><div class="t" style="left:1245.80px;width:23.86px;text-align:center;top:611.3px;height:18px;line-height:18px;font-size:15px;color:#e0555c;-webkit-text-stroke:0.25px #e0555c;">6</div><div class="t" style="left:1245.80px;width:23.86px;text-align:center;top:630.0px;height:18px;line-height:18px;font-size:15px;color:#5d8fe0;-webkit-text-stroke:0.25px #5d8fe0;">2</div><div class="t" style="left:1245.80px;width:23.86px;text-align:center;top:648.7px;height:18px;line-height:18px;font-size:15px;color:#6cc46a;-webkit-text-stroke:0.25px #6cc46a;">2</div><div style="left:1269.65px;top:406.7px;width:23.86px;height:197.3px;background:#74dc68;border-right:1px solid rgba(0,0,0,0.55);border-radius:4px 4px 0 0;"></div><div style="left:1269.65px;top:677px;width:23.86px;height:175.7px;background:#dd2b3d;border-right:1px solid rgba(0,0,0,0.55);border-radius:0 0 4px 4px;"></div><div class="t" style="left:1269.65px;width:23.86px;text-align:center;top:611.3px;height:18px;line-height:18px;font-size:15px;color:#e0555c;-webkit-text-stroke:0.25px #e0555c;">6</div><div class="t" style="left:1269.65px;width:23.86px;text-align:center;top:630.0px;height:18px;line-height:18px;font-size:15px;color:#e0555c;-webkit-text-stroke:0.25px #e0555c;">3</div><div class="t" style="left:1269.65px;width:23.86px;text-align:center;top:648.7px;height:18px;line-height:18px;font-size:15px;color:#e0555c;-webkit-text-stroke:0.25px #e0555c;">2</div><div style="left:1293.51px;top:407.8px;width:23.86px;height:196.2px;background:#74dc68;border-right:1px solid rgba(0,0,0,0.55);border-radius:4px 4px 0 0;"></div><div style="left:1293.51px;top:677px;width:23.86px;height:176.8px;background:#dd2b3d;border-right:1px solid rgba(0,0,0,0.55);border-radius:0 0 4px 4px;"></div><div class="t" style="left:1293.51px;width:23.86px;text-align:center;top:611.3px;height:18px;line-height:18px;font-size:15px;color:#5d8fe0;-webkit-text-stroke:0.25px #5d8fe0;">6</div><div class="t" style="left:1293.51px;width:23.86px;text-align:center;top:630.0px;height:18px;line-height:18px;font-size:15px;color:#e0555c;-webkit-text-stroke:0.25px #e0555c;">3</div><div class="t" style="left:1293.51px;width:23.86px;text-align:center;top:648.7px;height:18px;line-height:18px;font-size:15px;color:#e0555c;-webkit-text-stroke:0.25px #e0555c;">2</div><div style="left:1317.36px;top:409.0px;width:23.86px;height:195.0px;background:#aec85c;border-right:1px solid rgba(0,0,0,0.55);border-radius:4px 4px 0 0;"></div><div style="left:1317.36px;top:677px;width:23.86px;height:178.0px;background:#eb6a40;border-right:1px solid rgba(0,0,0,0.55);border-radius:0 0 4px 4px;"></div><div class="t" style="left:1317.36px;width:23.86px;text-align:center;top:611.3px;height:18px;line-height:18px;font-size:15px;color:#e0555c;-webkit-text-stroke:0.25px #e0555c;">6</div><div class="t" style="left:1317.36px;width:23.86px;text-align:center;top:630.0px;height:18px;line-height:18px;font-size:15px;color:#e0555c;-webkit-text-stroke:0.25px #e0555c;">3</div><div class="t" style="left:1317.36px;width:23.86px;text-align:center;top:648.7px;height:18px;line-height:18px;font-size:15px;color:#5d8fe0;-webkit-text-stroke:0.25px #5d8fe0;">2</div><div style="left:1341.22px;top:407.8px;width:9.78px;height:196.2px;background:#74dc68;border-right:1px solid rgba(0,0,0,0.55);border-radius:4px 0 0 0;"></div><div style="left:1341.22px;top:677px;width:9.78px;height:176.8px;background:#dd2b3d;border-right:1px solid rgba(0,0,0,0.55);border-radius:0 0 0 4px;"></div><div class="t" style="left:1341.22px;width:23.86px;text-align:center;top:611.3px;height:18px;line-height:18px;font-size:15px;color:#e0555c;-webkit-text-stroke:0.25px #e0555c;">6</div><div class="t" style="left:1341.22px;width:23.86px;text-align:center;top:630.0px;height:18px;line-height:18px;font-size:15px;color:#5d8fe0;-webkit-text-stroke:0.25px #5d8fe0;">3</div><div class="t" style="left:1341.22px;width:23.86px;text-align:center;top:648.7px;height:18px;line-height:18px;font-size:15px;color:#e0555c;-webkit-text-stroke:0.25px #e0555c;">2</div>
<div style="left:1351px;top:600px;width:29px;height:80px;background:#121212;"></div>
<svg style="position:absolute;left:97px;top:891px;" width="1239" height="72" viewBox="0 0 1239 72"><rect x="0" y="0" width="3.2" height="36" fill="#a0cc5c"/><rect x="0" y="37" width="3" height="35" fill="#e65b42"/><rect x="3" y="0" width="3.2" height="36" fill="#a9c95a"/><rect x="3" y="37" width="3" height="35" fill="#e96742"/><rect x="6" y="0" width="3.2" height="36" fill="#abc95a"/><rect x="6" y="37" width="3" height="35" fill="#ea6b42"/><rect x="9" y="0" width="3.2" height="36" fill="#a9c95a"/><rect x="9" y="37" width="3" height="35" fill="#e75d42"/><rect x="12" y="0" width="3.2" height="36" fill="#a8ca5b"/><rect x="12" y="37" width="3" height="35" fill="#e96642"/><rect x="15" y="0" width="3.2" height="36" fill="#abc95a"/><rect x="15" y="37" width="3" height="35" fill="#e96642"/><rect x="18" y="0" width="3.2" height="36" fill="#a4cb5b"/><rect x="18" y="37" width="3" height="35" fill="#e86342"/><rect x="21" y="0" width="3.2" height="36" fill="#a9c95a"/><rect x="21" y="37" width="3" height="35" fill="#e96942"/><rect x="24" y="0" width="3.2" height="36" fill="#a5ca5b"/><rect x="24" y="37" width="3" height="35" fill="#e86342"/><rect x="27" y="0" width="3.2" height="36" fill="#a1cc5c"/><rect x="27" y="37" width="3" height="35" fill="#e75d42"/><rect x="30" y="0" width="3.2" height="36" fill="#a4cb5b"/><rect x="30" y="37" width="3" height="35" fill="#e75d42"/><rect x="33" y="0" width="3.2" height="36" fill="#a7ca5b"/><rect x="33" y="37" width="3" height="35" fill="#e75e42"/><rect x="35" y="0" width="9" height="36" fill="#a9c95a"/><rect x="35" y="37" width="9" height="35" fill="#e86342"/><rect x="44" y="0" width="5" height="36" fill="#b6c457"/><rect x="44" y="37" width="5" height="35" fill="#ea6f42"/><rect x="49" y="0" width="3" height="36" fill="#b1c759"/><rect x="49" y="37" width="3" height="35" fill="#ea6a42"/><rect x="52" y="0" width="2" height="36" fill="#aec85a"/><rect x="52" y="37" width="2" height="35" fill="#e96842"/><rect x="54" y="0" width="4" height="36" fill="#adc85a"/><rect x="54" y="37" width="4" height="35" fill="#e96742"/><rect x="54" y="0" width="1" height="36" fill="#deae4a"/><rect x="54" y="37" width="1" height="35" fill="#ef9343"/><rect x="58" y="0" width="9" height="36" fill="#b3c558"/><rect x="58" y="37" width="9" height="35" fill="#ea6d42"/><rect x="67" y="0" width="6" height="36" fill="#b0c759"/><rect x="67" y="37" width="6" height="35" fill="#ea6a42"/><rect x="73" y="0" width="3" height="36" fill="#acc95a"/><rect x="73" y="37" width="3" height="35" fill="#e96642"/><rect x="76" y="0" width="3" height="36" fill="#aec85a"/><rect x="76" y="37" width="3" height="35" fill="#e96842"/><rect x="79" y="0" width="3" height="36" fill="#a7ca5b"/><rect x="79" y="37" width="3" height="35" fill="#e86242"/><rect x="79" y="0" width="1" height="36" fill="#e5aa48"/><rect x="79" y="37" width="1" height="35" fill="#f09843"/><rect x="82" y="0" width="8" height="36" fill="#b1c759"/><rect x="82" y="37" width="8" height="35" fill="#ea6b42"/><rect x="90" y="0" width="7" height="36" fill="#b8c357"/><rect x="90" y="37" width="7" height="35" fill="#eb7142"/><rect x="97" y="0" width="3" height="36" fill="#b7c357"/><rect x="97" y="37" width="3" height="35" fill="#ea7042"/><rect x="98" y="0" width="1" height="36" fill="#e9a846"/><rect x="98" y="37" width="1" height="35" fill="#f19c43"/><rect x="100" y="0" width="9" height="36" fill="#afc85a"/><rect x="100" y="37" width="9" height="35" fill="#e96942"/><rect x="109" y="0" width="8" height="36" fill="#b8c357"/><rect x="109" y="37" width="8" height="35" fill="#ea7142"/><rect x="117" y="0" width="6" height="36" fill="#a7ca5b"/><rect x="117" y="37" width="6" height="35" fill="#e86142"/><rect x="123" y="0" width="3" height="36" fill="#b9c256"/><rect x="123" y="37" width="3" height="35" fill="#eb7242"/><rect x="125" y="0" width="1" height="36" fill="#85d460"/><rect x="125" y="37" width="1" height="35" fill="#e04042"/><rect x="126" y="0" width="8" height="36" fill="#b9c356"/><rect x="126" y="37" width="8" height="35" fill="#eb7142"/><rect x="134" y="0" width="7" height="36" fill="#b2c659"/><rect x="134" y="37" width="7" height="35" fill="#ea6c42"/><rect x="141" y="0" width="4" height="36" fill="#a9c95a"/><rect x="141" y="37" width="4" height="35" fill="#e86342"/><rect x="145" y="0" width="5" height="36" fill="#abc95a"/><rect x="145" y="37" width="5" height="35" fill="#e96642"/><rect x="150" y="0" width="8" height="36" fill="#a9c95a"/><rect x="150" y="37" width="8" height="35" fill="#e86342"/><rect x="158" y="0" width="2" height="36" fill="#afc85a"/><rect x="158" y="37" width="2" height="35" fill="#e96942"/><rect x="160" y="0" width="8" height="36" fill="#aac95a"/><rect x="160" y="37" width="8" height="35" fill="#e86442"/><rect x="168" y="0" width="3" height="36" fill="#b7c357"/><rect x="168" y="37" width="3" height="35" fill="#ea7042"/><rect x="171" y="0" width="3" height="36" fill="#b4c558"/><rect x="171" y="37" width="3" height="35" fill="#ea6e42"/><rect x="172" y="0" width="1" height="36" fill="#8ad25f"/><rect x="172" y="37" width="1" height="35" fill="#e14542"/><rect x="174" y="0" width="2" height="36" fill="#b9c256"/><rect x="174" y="37" width="2" height="35" fill="#eb7242"/><rect x="176" y="0" width="2" height="36" fill="#b2c659"/><rect x="176" y="37" width="2" height="35" fill="#ea6c42"/><rect x="178" y="0" width="8" height="36" fill="#f1a444"/><rect x="178" y="37" width="8" height="35" fill="#f1a343"/><rect x="186" y="0" width="9" height="36" fill="#a8ca5b"/><rect x="186" y="37" width="9" height="35" fill="#e86242"/><rect x="187" y="0" width="1" height="36" fill="#8fd15e"/><rect x="187" y="37" width="1" height="35" fill="#e34a42"/><rect x="195" y="0" width="6" height="36" fill="#b3c558"/><rect x="195" y="37" width="6" height="35" fill="#ea6d42"/><rect x="199" y="0" width="1" height="36" fill="#e1ad49"/><rect x="199" y="37" width="1" height="35" fill="#ef9543"/><rect x="201" y="0" width="4" height="36" fill="#aac95a"/><rect x="201" y="37" width="4" height="35" fill="#e86442"/><rect x="205" y="0" width="3" height="36" fill="#a9c95a"/><rect x="205" y="37" width="3" height="35" fill="#e86342"/><rect x="208" y="0" width="2" height="36" fill="#adc85a"/><rect x="208" y="37" width="2" height="35" fill="#e96742"/><rect x="210" y="0" width="3" height="36" fill="#b8c357"/><rect x="210" y="37" width="3" height="35" fill="#eb7142"/><rect x="213" y="0" width="7" height="36" fill="#b2c659"/><rect x="213" y="37" width="7" height="35" fill="#ea6c42"/><rect x="220" y="0" width="3" height="36" fill="#afc85a"/><rect x="220" y="37" width="3" height="35" fill="#e96942"/><rect x="223" y="0" width="2" height="36" fill="#b5c458"/><rect x="223" y="37" width="2" height="35" fill="#ea6f42"/><rect x="225" y="0" width="9" height="36" fill="#b5c558"/><rect x="225" y="37" width="9" height="35" fill="#ea6e42"/><rect x="234" y="0" width="5" height="36" fill="#afc85a"/><rect x="234" y="37" width="5" height="35" fill="#e96942"/><rect x="239" y="0" width="9" height="36" fill="#a8ca5b"/><rect x="239" y="37" width="9" height="35" fill="#e86342"/><rect x="248" y="0" width="8" height="36" fill="#aac95a"/><rect x="248" y="37" width="8" height="35" fill="#e86442"/><rect x="256" y="0" width="5" height="36" fill="#aec85a"/><rect x="256" y="37" width="5" height="35" fill="#e96842"/><rect x="261" y="0" width="2" height="36" fill="#acc95a"/><rect x="261" y="37" width="2" height="35" fill="#e96642"/><rect x="263" y="0" width="8" height="36" fill="#b0c759"/><rect x="263" y="37" width="8" height="35" fill="#ea6a42"/><rect x="271" y="0" width="10" height="36" fill="#f0a444"/><rect x="271" y="37" width="10" height="35" fill="#f1a243"/><rect x="281" y="0" width="9" height="36" fill="#b6c457"/><rect x="281" y="37" width="9" height="35" fill="#ea6f42"/><rect x="290" y="0" width="6" height="36" fill="#b1c759"/><rect x="290" y="37" width="6" height="35" fill="#ea6b42"/><rect x="291" y="0" width="1" height="36" fill="#8fd15e"/><rect x="291" y="37" width="1" height="35" fill="#e24a42"/><rect x="296" y="0" width="2" height="36" fill="#adc85a"/><rect x="296" y="37" width="2" height="35" fill="#e96742"/><rect x="298" y="0" width="3" height="36" fill="#b3c558"/><rect x="298" y="37" width="3" height="35" fill="#ea6d42"/><rect x="301" y="0" width="3" height="36" fill="#aec85a"/><rect x="301" y="37" width="3" height="35" fill="#e96842"/><rect x="304" y="0" width="2" height="36" fill="#adc85a"/><rect x="304" y="37" width="2" height="35" fill="#e96742"/><rect x="304" y="0" width="1" height="36" fill="#d8b14c"/><rect x="304" y="37" width="1" height="35" fill="#ee8d43"/><rect x="306" y="0" width="4" height="36" fill="#b4c558"/><rect x="306" y="37" width="4" height="35" fill="#ea6e42"/><rect x="310" y="0" width="8" height="36" fill="#bac256"/><rect x="310" y="37" width="8" height="35" fill="#eb7342"/><rect x="318" y="0" width="8" height="36" fill="#b1c759"/><rect x="318" y="37" width="8" height="35" fill="#ea6b42"/><rect x="326" y="0" width="7" height="36" fill="#b3c658"/><rect x="326" y="37" width="7" height="35" fill="#ea6c42"/><rect x="333" y="0" width="3" height="36" fill="#b8c357"/><rect x="333" y="37" width="3" height="35" fill="#eb7142"/><rect x="336" y="0" width="7" height="36" fill="#b7c357"/><rect x="336" y="37" width="7" height="35" fill="#ea7042"/><rect x="340" y="0" width="1" height="36" fill="#e4ab48"/><rect x="340" y="37" width="1" height="35" fill="#f09743"/><rect x="343" y="0" width="5" height="36" fill="#d9b14c"/><rect x="343" y="37" width="5" height="35" fill="#ef8e43"/><rect x="343" y="0" width="1" height="36" fill="#b8c357"/><rect x="343" y="37" width="1" height="35" fill="#eb7142"/><rect x="348" y="0" width="4" height="36" fill="#dcaf4b"/><rect x="348" y="37" width="4" height="35" fill="#ef9043"/><rect x="352" y="0" width="7" height="36" fill="#e1ac49"/><rect x="352" y="37" width="7" height="35" fill="#f09543"/><rect x="359" y="0" width="6" height="36" fill="#d3b44e"/><rect x="359" y="37" width="6" height="35" fill="#ee8943"/><rect x="365" y="0" width="4" height="36" fill="#d7b24c"/><rect x="365" y="37" width="4" height="35" fill="#ee8c43"/><rect x="369" y="0" width="6" height="36" fill="#e9a846"/><rect x="369" y="37" width="6" height="35" fill="#f19c43"/><rect x="375" y="0" width="6" height="36" fill="#eba746"/><rect x="375" y="37" width="6" height="35" fill="#f19e43"/><rect x="381" y="0" width="6" height="36" fill="#e2ac49"/><rect x="381" y="37" width="6" height="35" fill="#f09643"/><rect x="381" y="0" width="2" height="36" fill="#bfbf54"/><rect x="381" y="37" width="2" height="35" fill="#eb7742"/><rect x="387" y="0" width="2" height="36" fill="#e1ac49"/><rect x="387" y="37" width="2" height="35" fill="#f09543"/><rect x="389" y="0" width="5" height="36" fill="#efa544"/><rect x="389" y="37" width="5" height="35" fill="#f1a143"/><rect x="394" y="0" width="8" height="36" fill="#d4b34d"/><rect x="394" y="37" width="8" height="35" fill="#ee8a43"/><rect x="402" y="0" width="1" height="36" fill="#d5b34d"/><rect x="402" y="37" width="1" height="35" fill="#ee8a43"/><rect x="403" y="0" width="7" height="36" fill="#b5c458"/><rect x="403" y="37" width="7" height="35" fill="#ea6e42"/><rect x="410" y="0" width="5" height="36" fill="#b8c357"/><rect x="410" y="37" width="5" height="35" fill="#eb7142"/><rect x="411" y="0" width="1" height="36" fill="#dbb04b"/><rect x="411" y="37" width="1" height="35" fill="#ef9043"/><rect x="415" y="0" width="8" height="36" fill="#b6c457"/><rect x="415" y="37" width="8" height="35" fill="#ea6f42"/><rect x="423" y="0" width="4" height="36" fill="#b8c357"/><rect x="423" y="37" width="4" height="35" fill="#eb7142"/><rect x="427" y="0" width="3" height="36" fill="#83d460"/><rect x="427" y="37" width="3" height="35" fill="#e03e42"/><rect x="430" y="0" width="9" height="36" fill="#bcc155"/><rect x="430" y="37" width="9" height="35" fill="#eb7542"/><rect x="439" y="0" width="5" height="36" fill="#b1c659"/><rect x="439" y="37" width="5" height="35" fill="#ea6b42"/><rect x="444" y="0" width="6" height="36" fill="#b2c659"/><rect x="444" y="37" width="6" height="35" fill="#ea6b42"/><rect x="450" y="0" width="5" height="36" fill="#b8c357"/><rect x="450" y="37" width="5" height="35" fill="#eb7142"/><rect x="455" y="0" width="5" height="36" fill="#b6c457"/><rect x="455" y="37" width="5" height="35" fill="#ea6f42"/><rect x="460" y="0" width="6" height="36" fill="#adc85a"/><rect x="460" y="37" width="6" height="35" fill="#e96742"/><rect x="466" y="0" width="6" height="36" fill="#bac256"/><rect x="466" y="37" width="6" height="35" fill="#eb7342"/><rect x="472" y="0" width="9" height="36" fill="#acc95a"/><rect x="472" y="37" width="9" height="35" fill="#e96642"/><rect x="481" y="0" width="5" height="36" fill="#b8c357"/><rect x="481" y="37" width="5" height="35" fill="#eb7142"/><rect x="486" y="0" width="4" height="36" fill="#b8c357"/><rect x="486" y="37" width="4" height="35" fill="#eb7142"/><rect x="490" y="0" width="8" height="36" fill="#bac256"/><rect x="490" y="37" width="8" height="35" fill="#eb7342"/><rect x="498" y="0" width="5" height="36" fill="#acc85a"/><rect x="498" y="37" width="5" height="35" fill="#e96642"/><rect x="502" y="0" width="2" height="36" fill="#dcaf4b"/><rect x="502" y="37" width="2" height="35" fill="#ef9143"/><rect x="503" y="0" width="10" height="36" fill="#f1a343"/><rect x="503" y="37" width="10" height="35" fill="#f1a444"/><rect x="513" y="0" width="5" height="36" fill="#e4ab48"/><rect x="513" y="37" width="5" height="35" fill="#f09843"/><rect x="518" y="0" width="3" height="36" fill="#f1a343"/><rect x="518" y="37" width="3" height="35" fill="#f1a444"/><rect x="518" y="0" width="1" height="36" fill="#c4bc53"/><rect x="518" y="37" width="1" height="35" fill="#ec7b42"/><rect x="521" y="0" width="9" height="36" fill="#eca745"/><rect x="521" y="37" width="9" height="35" fill="#f19f43"/><rect x="530" y="0" width="3" height="36" fill="#eaa846"/><rect x="530" y="37" width="3" height="35" fill="#f19d43"/><rect x="533" y="0" width="9" height="36" fill="#eda645"/><rect x="533" y="37" width="9" height="35" fill="#f1a043"/><rect x="542" y="0" width="6" height="36" fill="#eba746"/><rect x="542" y="37" width="6" height="35" fill="#f19d43"/><rect x="548" y="0" width="3" height="36" fill="#e6aa47"/><rect x="548" y="37" width="3" height="35" fill="#f09943"/><rect x="551" y="0" width="9" height="36" fill="#acc85a"/><rect x="551" y="37" width="9" height="35" fill="#e96642"/><rect x="560" y="0" width="4" height="36" fill="#b2c659"/><rect x="560" y="37" width="4" height="35" fill="#ea6c42"/><rect x="564" y="0" width="5" height="36" fill="#b6c457"/><rect x="564" y="37" width="5" height="35" fill="#ea6f42"/><rect x="569" y="0" width="4" height="36" fill="#aec85a"/><rect x="569" y="37" width="4" height="35" fill="#e96842"/><rect x="573" y="0" width="6" height="36" fill="#afc85a"/><rect x="573" y="37" width="6" height="35" fill="#e96942"/><rect x="579" y="0" width="3" height="36" fill="#7ed661"/><rect x="579" y="37" width="3" height="35" fill="#df3a42"/><rect x="582" y="0" width="9" height="36" fill="#b5c558"/><rect x="582" y="37" width="9" height="35" fill="#ea6e42"/><rect x="587" y="0" width="2" height="36" fill="#cbb850"/><rect x="587" y="37" width="2" height="35" fill="#ed8242"/><rect x="591" y="0" width="3" height="36" fill="#b6c457"/><rect x="591" y="37" width="3" height="35" fill="#ea7042"/><rect x="594" y="0" width="5" height="36" fill="#b7c457"/><rect x="594" y="37" width="5" height="35" fill="#ea7042"/><rect x="599" y="0" width="3" height="36" fill="#b4c558"/><rect x="599" y="37" width="3" height="35" fill="#ea6d42"/><rect x="602" y="0" width="8" height="36" fill="#b8c357"/><rect x="602" y="37" width="8" height="35" fill="#eb7142"/><rect x="610" y="0" width="3" height="36" fill="#b0c759"/><rect x="610" y="37" width="3" height="35" fill="#ea6a42"/><rect x="613" y="0" width="6" height="36" fill="#b2c659"/><rect x="613" y="37" width="6" height="35" fill="#ea6c42"/><rect x="619" y="0" width="2" height="36" fill="#b9c356"/><rect x="619" y="37" width="2" height="35" fill="#eb7142"/><rect x="621" y="0" width="9" height="36" fill="#d3b44e"/><rect x="621" y="37" width="9" height="35" fill="#ee8843"/><rect x="630" y="0" width="10" height="36" fill="#d7b24c"/><rect x="630" y="37" width="10" height="35" fill="#ee8c43"/><rect x="640" y="0" width="3" height="36" fill="#e2ac49"/><rect x="640" y="37" width="3" height="35" fill="#f09643"/><rect x="643" y="0" width="5" height="36" fill="#d6b34d"/><rect x="643" y="37" width="5" height="35" fill="#ee8b43"/><rect x="648" y="0" width="9" height="36" fill="#d3b44e"/><rect x="648" y="37" width="9" height="35" fill="#ee8943"/><rect x="657" y="0" width="6" height="36" fill="#e3ac48"/><rect x="657" y="37" width="6" height="35" fill="#f09643"/><rect x="663" y="0" width="12" height="36" fill="#eda645"/><rect x="663" y="37" width="12" height="35" fill="#f1a043"/><rect x="675" y="0" width="4" height="36" fill="#f19f43"/><rect x="675" y="37" width="4" height="35" fill="#eca645"/><rect x="676" y="0" width="1" height="36" fill="#ef9443"/><rect x="676" y="37" width="1" height="35" fill="#e0ad49"/><rect x="679" y="0" width="10" height="36" fill="#f19f43"/><rect x="679" y="37" width="10" height="35" fill="#eda645"/><rect x="689" y="0" width="9" height="36" fill="#f1a043"/><rect x="689" y="37" width="9" height="35" fill="#eda645"/><rect x="698" y="0" width="11" height="36" fill="#f1a143"/><rect x="698" y="37" width="11" height="35" fill="#efa544"/><rect x="699" y="0" width="2" height="36" fill="#f09743"/><rect x="699" y="37" width="2" height="35" fill="#e3ab48"/><rect x="709" y="0" width="6" height="36" fill="#eca645"/><rect x="709" y="37" width="6" height="35" fill="#f19f43"/><rect x="715" y="0" width="5" height="36" fill="#f19f43"/><rect x="715" y="37" width="5" height="35" fill="#eda645"/><rect x="720" y="0" width="3" height="36" fill="#f1a243"/><rect x="720" y="37" width="3" height="35" fill="#f0a444"/><rect x="723" y="0" width="4" height="36" fill="#ec7f42"/><rect x="723" y="37" width="4" height="35" fill="#c8ba51"/><rect x="727" y="0" width="5" height="36" fill="#ec7f42"/><rect x="727" y="37" width="5" height="35" fill="#c8ba51"/><rect x="732" y="0" width="1" height="36" fill="#ed8142"/><rect x="732" y="37" width="1" height="35" fill="#cab951"/><rect x="733" y="0" width="4" height="36" fill="#acc95a"/><rect x="733" y="37" width="4" height="35" fill="#e96642"/><rect x="737" y="0" width="3" height="36" fill="#b5c558"/><rect x="737" y="37" width="3" height="35" fill="#ea6e42"/><rect x="740" y="0" width="7" height="36" fill="#bac256"/><rect x="740" y="37" width="7" height="35" fill="#eb7242"/><rect x="747" y="0" width="5" height="36" fill="#b2c659"/><rect x="747" y="37" width="5" height="35" fill="#ea6c42"/><rect x="752" y="0" width="5" height="36" fill="#b5c558"/><rect x="752" y="37" width="5" height="35" fill="#ea6e42"/><rect x="757" y="0" width="2" height="36" fill="#b2c659"/><rect x="757" y="37" width="2" height="35" fill="#ea6c42"/><rect x="759" y="0" width="2" height="36" fill="#b2c659"/><rect x="759" y="37" width="2" height="35" fill="#ea6c42"/><rect x="761" y="0" width="3" height="36" fill="#afc85a"/><rect x="761" y="37" width="3" height="35" fill="#e96942"/><rect x="764" y="0" width="5" height="36" fill="#b2c659"/><rect x="764" y="37" width="5" height="35" fill="#ea6c42"/><rect x="769" y="0" width="5" height="36" fill="#b8c357"/><rect x="769" y="37" width="5" height="35" fill="#eb7142"/><rect x="774" y="0" width="3" height="36" fill="#afc85a"/><rect x="774" y="37" width="3" height="35" fill="#e96942"/><rect x="777" y="0" width="5" height="36" fill="#b6c457"/><rect x="777" y="37" width="5" height="35" fill="#ea6f42"/><rect x="782" y="0" width="4" height="36" fill="#b8c357"/><rect x="782" y="37" width="4" height="35" fill="#ea7142"/><rect x="786" y="0" width="7" height="36" fill="#b9c256"/><rect x="786" y="37" width="7" height="35" fill="#eb7242"/><rect x="793" y="0" width="4" height="36" fill="#b6c457"/><rect x="793" y="37" width="4" height="35" fill="#ea6f42"/><rect x="795" y="0" width="1" height="36" fill="#dcaf4b"/><rect x="795" y="37" width="1" height="35" fill="#ef9043"/><rect x="797" y="0" width="8" height="36" fill="#b3c558"/><rect x="797" y="37" width="8" height="35" fill="#ea6d42"/><rect x="805" y="0" width="3" height="36" fill="#aec85a"/><rect x="805" y="37" width="3" height="35" fill="#e96842"/><rect x="808" y="0" width="3" height="36" fill="#eea545"/><rect x="808" y="37" width="3" height="35" fill="#f1a143"/><rect x="811" y="0" width="5" height="36" fill="#f1a243"/><rect x="811" y="37" width="5" height="35" fill="#efa544"/><rect x="811" y="0" width="1" height="36" fill="#eb7342"/><rect x="811" y="37" width="1" height="35" fill="#bbc156"/><rect x="816" y="0" width="6" height="36" fill="#f1a343"/><rect x="816" y="37" width="6" height="35" fill="#f1a444"/><rect x="818" y="0" width="1" height="36" fill="#ea6f42"/><rect x="818" y="37" width="1" height="35" fill="#b6c457"/><rect x="822" y="0" width="5" height="36" fill="#f19e43"/><rect x="822" y="37" width="5" height="35" fill="#eba746"/><rect x="825" y="0" width="2" height="36" fill="#ea6f42"/><rect x="825" y="37" width="2" height="35" fill="#b6c457"/><rect x="826" y="0" width="1" height="36" fill="#e96742"/><rect x="826" y="37" width="1" height="35" fill="#adc85a"/><rect x="827" y="0" width="4" height="36" fill="#f19f43"/><rect x="827" y="37" width="4" height="35" fill="#eca645"/><rect x="827" y="0" width="2" height="36" fill="#c7ba52"/><rect x="827" y="37" width="2" height="35" fill="#ec7e42"/><rect x="831" y="0" width="6" height="36" fill="#eaa846"/><rect x="831" y="37" width="6" height="35" fill="#f19d43"/><rect x="835" y="0" width="1" height="36" fill="#e96742"/><rect x="835" y="37" width="1" height="35" fill="#adc85a"/><rect x="837" y="0" width="3" height="36" fill="#f1a043"/><rect x="837" y="37" width="3" height="35" fill="#eea545"/><rect x="837" y="0" width="2" height="36" fill="#eb7342"/><rect x="837" y="37" width="2" height="35" fill="#bac256"/><rect x="839" y="0" width="1" height="36" fill="#e76042"/><rect x="839" y="37" width="1" height="35" fill="#a5ca5b"/><rect x="840" y="0" width="10" height="36" fill="#f1a143"/><rect x="840" y="37" width="10" height="35" fill="#efa544"/><rect x="845" y="0" width="2" height="36" fill="#ea6b42"/><rect x="845" y="37" width="2" height="35" fill="#b2c659"/><rect x="850" y="0" width="3" height="36" fill="#eea545"/><rect x="850" y="37" width="3" height="35" fill="#f1a143"/><rect x="852" y="0" width="1" height="36" fill="#eb7542"/><rect x="852" y="37" width="1" height="35" fill="#bdc055"/><rect x="853" y="0" width="9" height="36" fill="#eaa746"/><rect x="853" y="37" width="9" height="35" fill="#f19d43"/><rect x="853" y="0" width="1" height="36" fill="#ea6f42"/><rect x="853" y="37" width="1" height="35" fill="#b6c457"/><rect x="862" y="0" width="4" height="36" fill="#eaa846"/><rect x="862" y="37" width="4" height="35" fill="#f19d43"/><rect x="863" y="0" width="1" height="36" fill="#ea6f42"/><rect x="863" y="37" width="1" height="35" fill="#b6c457"/><rect x="866" y="0" width="2" height="36" fill="#f1a343"/><rect x="866" y="37" width="2" height="35" fill="#f1a444"/><rect x="866" y="0" width="1" height="36" fill="#eb7642"/><rect x="866" y="37" width="1" height="35" fill="#bec055"/><rect x="867" y="0" width="1" height="36" fill="#c5bc52"/><rect x="867" y="37" width="1" height="35" fill="#ec7c42"/><rect x="868" y="0" width="5" height="36" fill="#f19f43"/><rect x="868" y="37" width="5" height="35" fill="#eda645"/><rect x="871" y="0" width="2" height="36" fill="#ea7142"/><rect x="871" y="37" width="2" height="35" fill="#b8c357"/><rect x="873" y="0" width="8" height="36" fill="#f19f43"/><rect x="873" y="37" width="8" height="35" fill="#eca645"/><rect x="880" y="0" width="1" height="36" fill="#ea7042"/><rect x="880" y="37" width="1" height="35" fill="#b7c357"/><rect x="881" y="0" width="10" height="36" fill="#eda645"/><rect x="881" y="37" width="10" height="35" fill="#f1a043"/><rect x="891" y="0" width="4" height="36" fill="#eda645"/><rect x="891" y="37" width="4" height="35" fill="#f19f43"/><rect x="893" y="0" width="1" height="36" fill="#eb7342"/><rect x="893" y="37" width="1" height="35" fill="#bac256"/><rect x="894" y="0" width="1" height="36" fill="#c3bd53"/><rect x="894" y="37" width="1" height="35" fill="#ec7a42"/><rect x="895" y="0" width="5" height="36" fill="#eea545"/><rect x="895" y="37" width="5" height="35" fill="#f1a143"/><rect x="896" y="0" width="1" height="36" fill="#ea6c42"/><rect x="896" y="37" width="1" height="35" fill="#b2c659"/><rect x="900" y="0" width="4" height="36" fill="#efa544"/><rect x="900" y="37" width="4" height="35" fill="#f1a243"/><rect x="900" y="0" width="1" height="36" fill="#eb7142"/><rect x="900" y="37" width="1" height="35" fill="#b9c356"/><rect x="901" y="0" width="1" height="36" fill="#e96742"/><rect x="901" y="37" width="1" height="35" fill="#adc85a"/><rect x="904" y="0" width="6" height="36" fill="#f0a444"/><rect x="904" y="37" width="6" height="35" fill="#f1a243"/><rect x="910" y="0" width="10" height="36" fill="#eca745"/><rect x="910" y="37" width="10" height="35" fill="#f19f43"/><rect x="920" y="0" width="3" height="36" fill="#eda645"/><rect x="920" y="37" width="3" height="35" fill="#f1a043"/><rect x="921" y="0" width="2" height="36" fill="#ea7042"/><rect x="921" y="37" width="2" height="35" fill="#b7c357"/><rect x="923" y="0" width="7" height="36" fill="#f1a143"/><rect x="923" y="37" width="7" height="35" fill="#efa544"/><rect x="926" y="0" width="2" height="36" fill="#eb7342"/><rect x="926" y="37" width="2" height="35" fill="#bbc156"/><rect x="930" y="0" width="3" height="36" fill="#efa544"/><rect x="930" y="37" width="3" height="35" fill="#f1a143"/><rect x="933" y="0" width="9" height="36" fill="#f19d43"/><rect x="933" y="37" width="9" height="35" fill="#eaa846"/><rect x="942" y="0" width="9" height="36" fill="#eda645"/><rect x="942" y="37" width="9" height="35" fill="#f1a043"/><rect x="951" y="0" width="4" height="36" fill="#f1a143"/><rect x="951" y="37" width="4" height="35" fill="#eea545"/><rect x="953" y="0" width="1" height="36" fill="#eb7442"/><rect x="953" y="37" width="1" height="35" fill="#bbc156"/><rect x="955" y="0" width="5" height="36" fill="#f19f43"/><rect x="955" y="37" width="5" height="35" fill="#eda645"/><rect x="957" y="0" width="2" height="36" fill="#ea7042"/><rect x="957" y="37" width="2" height="35" fill="#b7c357"/><rect x="960" y="0" width="1" height="36" fill="#f19e43"/><rect x="960" y="37" width="1" height="35" fill="#eba746"/><rect x="960" y="0" width="1" height="36" fill="#eb7342"/><rect x="960" y="37" width="1" height="35" fill="#bac256"/><rect x="961" y="0" width="8" height="36" fill="#c4bd53"/><rect x="961" y="37" width="8" height="35" fill="#ec7b42"/><rect x="969" y="0" width="2" height="36" fill="#c0be54"/><rect x="969" y="37" width="2" height="35" fill="#ec7842"/><rect x="971" y="0" width="8" height="36" fill="#adc85a"/><rect x="971" y="37" width="8" height="35" fill="#e96742"/><rect x="979" y="0" width="8" height="36" fill="#b8c357"/><rect x="979" y="37" width="8" height="35" fill="#eb7142"/><rect x="987" y="0" width="7" height="36" fill="#abc95a"/><rect x="987" y="37" width="7" height="35" fill="#e96642"/><rect x="994" y="0" width="2" height="36" fill="#bec055"/><rect x="994" y="37" width="2" height="35" fill="#eb7642"/><rect x="996" y="0" width="8" height="36" fill="#bfbf54"/><rect x="996" y="37" width="8" height="35" fill="#eb7742"/><rect x="1004" y="0" width="4" height="36" fill="#bec055"/><rect x="1004" y="37" width="4" height="35" fill="#eb7642"/><rect x="1008" y="0" width="4" height="36" fill="#b5c458"/><rect x="1008" y="37" width="4" height="35" fill="#ea6f42"/><rect x="1012" y="0" width="5" height="36" fill="#b6c457"/><rect x="1012" y="37" width="5" height="35" fill="#ea6f42"/><rect x="1017" y="0" width="4" height="36" fill="#bec055"/><rect x="1017" y="37" width="4" height="35" fill="#eb7642"/><rect x="1021" y="0" width="7" height="36" fill="#bec055"/><rect x="1021" y="37" width="7" height="35" fill="#eb7642"/><rect x="1028" y="0" width="5" height="36" fill="#adc85a"/><rect x="1028" y="37" width="5" height="35" fill="#e96742"/><rect x="1033" y="0" width="6" height="36" fill="#eb7242"/><rect x="1033" y="37" width="6" height="35" fill="#b9c356"/><rect x="1039" y="0" width="4" height="36" fill="#eb7242"/><rect x="1039" y="37" width="4" height="35" fill="#b9c256"/><rect x="1043" y="0" width="7" height="36" fill="#ea6f42"/><rect x="1043" y="37" width="7" height="35" fill="#b6c457"/><rect x="1050" y="0" width="3" height="36" fill="#f19d43"/><rect x="1050" y="37" width="3" height="35" fill="#eaa846"/><rect x="1053" y="0" width="4" height="36" fill="#ec7942"/><rect x="1053" y="37" width="4" height="35" fill="#c1be54"/><rect x="1057" y="0" width="2" height="36" fill="#e96842"/><rect x="1057" y="37" width="2" height="35" fill="#aec85a"/><rect x="1059" y="0" width="8" height="36" fill="#ea6d42"/><rect x="1059" y="37" width="8" height="35" fill="#b3c558"/><rect x="1067" y="0" width="6" height="36" fill="#ea6d42"/><rect x="1067" y="37" width="6" height="35" fill="#b3c558"/><rect x="1073" y="0" width="2" height="36" fill="#e55442"/><rect x="1073" y="37" width="2" height="35" fill="#99ce5d"/><rect x="1075" y="0" width="3" height="36" fill="#f1a143"/><rect x="1075" y="37" width="3" height="35" fill="#efa544"/><rect x="1078" y="0" width="8" height="36" fill="#eb7542"/><rect x="1078" y="37" width="8" height="35" fill="#bcc055"/><rect x="1086" y="0" width="8" height="36" fill="#f19e43"/><rect x="1086" y="37" width="8" height="35" fill="#eba746"/><rect x="1094" y="0" width="7" height="36" fill="#f1a444"/><rect x="1094" y="37" width="7" height="35" fill="#f1a343"/><rect x="1094" y="0" width="1" height="36" fill="#e45042"/><rect x="1094" y="37" width="1" height="35" fill="#95cf5d"/><rect x="1101" y="0" width="8" height="36" fill="#e45042"/><rect x="1101" y="37" width="8" height="35" fill="#95cf5d"/><rect x="1109" y="0" width="3" height="36" fill="#e96742"/><rect x="1109" y="37" width="3" height="35" fill="#adc85a"/><rect x="1112" y="0" width="8" height="36" fill="#ea6b42"/><rect x="1112" y="37" width="8" height="35" fill="#b2c659"/><rect x="1120" y="0" width="6" height="36" fill="#e45042"/><rect x="1120" y="37" width="6" height="35" fill="#95cf5d"/><rect x="1125" y="0" width="2" height="36" fill="#e34c42"/><rect x="1125" y="37" width="2" height="35" fill="#91d05e"/><rect x="1126" y="0" width="8" height="36" fill="#eda645"/><rect x="1126" y="37" width="8" height="35" fill="#f19f43"/><rect x="1134" y="0" width="3" height="36" fill="#e96642"/><rect x="1134" y="37" width="3" height="35" fill="#acc85a"/><rect x="1137" y="0" width="9" height="36" fill="#e96942"/><rect x="1137" y="37" width="9" height="35" fill="#afc85a"/><rect x="1139" y="0" width="1" height="36" fill="#e34d42"/><rect x="1139" y="37" width="1" height="35" fill="#92d05e"/><rect x="1146" y="0" width="9" height="36" fill="#f1a243"/><rect x="1146" y="37" width="9" height="35" fill="#f0a444"/><rect x="1155" y="0" width="2" height="36" fill="#ea6f42"/><rect x="1155" y="37" width="2" height="35" fill="#b5c458"/><rect x="1157" y="0" width="9" height="36" fill="#eb7242"/><rect x="1157" y="37" width="9" height="35" fill="#b9c256"/><rect x="1166" y="0" width="5" height="36" fill="#e96942"/><rect x="1166" y="37" width="5" height="35" fill="#afc85a"/><rect x="1171" y="0" width="5" height="36" fill="#ec7a42"/><rect x="1171" y="37" width="5" height="35" fill="#c2bd53"/><rect x="1176" y="0" width="4" height="36" fill="#e55742"/><rect x="1176" y="37" width="4" height="35" fill="#9ccd5c"/><rect x="1180" y="0" width="5" height="36" fill="#eb7242"/><rect x="1180" y="37" width="5" height="35" fill="#b9c256"/><rect x="1185" y="0" width="6" height="36" fill="#e55642"/><rect x="1185" y="37" width="6" height="35" fill="#9bcd5c"/><rect x="1191" y="0" width="8" height="36" fill="#e55742"/><rect x="1191" y="37" width="8" height="35" fill="#9ccd5c"/><rect x="1199" y="0" width="9" height="36" fill="#f19e43"/><rect x="1199" y="37" width="9" height="35" fill="#eba746"/><rect x="1208" y="0" width="5" height="36" fill="#ea7142"/><rect x="1208" y="37" width="5" height="35" fill="#b8c357"/><rect x="1213" y="0" width="6" height="36" fill="#ec7942"/><rect x="1213" y="37" width="6" height="35" fill="#c2be53"/><rect x="1217" y="0" width="1" height="36" fill="#e55442"/><rect x="1217" y="37" width="1" height="35" fill="#99ce5d"/><rect x="1219" y="0" width="4" height="36" fill="#e34e42"/><rect x="1219" y="37" width="4" height="35" fill="#93d05e"/><rect x="1223" y="0" width="9" height="36" fill="#ea6b42"/><rect x="1223" y="37" width="9" height="35" fill="#b1c759"/><rect x="1232" y="0" width="2" height="36" fill="#ea6d42"/><rect x="1232" y="37" width="2" height="35" fill="#b4c558"/><rect x="1234" y="0" width="3" height="36" fill="#e96942"/><rect x="1234" y="37" width="3" height="35" fill="#afc85a"/><rect x="1237" y="0" width="2" height="36" fill="#e45242"/><rect x="1237" y="37" width="2" height="35" fill="#98ce5d"/><rect x="44" y="0" width="1" height="36" fill="#c6bb52" opacity="0.8"/><rect x="44" y="37" width="1" height="35" fill="#ef9043" opacity="0.8"/><rect x="49" y="0" width="1" height="36" fill="#c0be54" opacity="0.8"/><rect x="49" y="37" width="1" height="35" fill="#ee8b43" opacity="0.8"/><rect x="52" y="0" width="1" height="36" fill="#bdc055" opacity="0.8"/><rect x="52" y="37" width="1" height="35" fill="#ee8843" opacity="0.8"/><rect x="73" y="0" width="1" height="36" fill="#bbc156" opacity="0.8"/><rect x="73" y="37" width="1" height="35" fill="#ed8642" opacity="0.8"/><rect x="76" y="0" width="1" height="36" fill="#bec055" opacity="0.8"/><rect x="76" y="37" width="1" height="35" fill="#ee8943" opacity="0.8"/><rect x="90" y="0" width="1" height="36" fill="#c8ba51" opacity="0.8"/><rect x="90" y="37" width="1" height="35" fill="#ef9243" opacity="0.8"/><rect x="109" y="0" width="1" height="36" fill="#c7ba52" opacity="0.8"/><rect x="109" y="37" width="1" height="35" fill="#ef9143" opacity="0.8"/><rect x="117" y="0" width="1" height="36" fill="#b5c558" opacity="0.8"/><rect x="117" y="37" width="1" height="35" fill="#ed8142" opacity="0.8"/><rect x="123" y="0" width="1" height="36" fill="#c9ba51" opacity="0.8"/><rect x="123" y="37" width="1" height="35" fill="#ef9243" opacity="0.8"/><rect x="126" y="0" width="1" height="36" fill="#c8ba51" opacity="0.8"/><rect x="126" y="37" width="1" height="35" fill="#ef9243" opacity="0.8"/><rect x="134" y="0" width="1" height="36" fill="#c2bd53" opacity="0.8"/><rect x="134" y="37" width="1" height="35" fill="#ee8c43" opacity="0.8"/><rect x="141" y="0" width="1" height="36" fill="#b8c357" opacity="0.8"/><rect x="141" y="37" width="1" height="35" fill="#ed8342" opacity="0.8"/><rect x="145" y="0" width="1" height="36" fill="#bbc156" opacity="0.8"/><rect x="145" y="37" width="1" height="35" fill="#ed8642" opacity="0.8"/><rect x="158" y="0" width="1" height="36" fill="#bfbf54" opacity="0.8"/><rect x="158" y="37" width="1" height="35" fill="#ee8a43" opacity="0.8"/><rect x="168" y="0" width="1" height="36" fill="#c7bb52" opacity="0.8"/><rect x="168" y="37" width="1" height="35" fill="#ef9143" opacity="0.8"/><rect x="174" y="0" width="1" height="36" fill="#c9ba51" opacity="0.8"/><rect x="174" y="37" width="1" height="35" fill="#ef9243" opacity="0.8"/><rect x="205" y="0" width="1" height="36" fill="#b8c357" opacity="0.8"/><rect x="205" y="37" width="1" height="35" fill="#ed8342" opacity="0.8"/><rect x="208" y="0" width="1" height="36" fill="#bdc055" opacity="0.8"/><rect x="208" y="37" width="1" height="35" fill="#ee8843" opacity="0.8"/><rect x="210" y="0" width="1" height="36" fill="#c8ba51" opacity="0.8"/><rect x="210" y="37" width="1" height="35" fill="#ef9243" opacity="0.8"/><rect x="220" y="0" width="1" height="36" fill="#bfbf54" opacity="0.8"/><rect x="220" y="37" width="1" height="35" fill="#ee8a43" opacity="0.8"/><rect x="225" y="0" width="1" height="36" fill="#c4bc53" opacity="0.8"/><rect x="225" y="37" width="1" height="35" fill="#ef8f43" opacity="0.8"/><rect x="239" y="0" width="1" height="36" fill="#b7c357" opacity="0.8"/><rect x="239" y="37" width="1" height="35" fill="#ed8342" opacity="0.8"/><rect x="256" y="0" width="1" height="36" fill="#bec055" opacity="0.8"/><rect x="256" y="37" width="1" height="35" fill="#ee8843" opacity="0.8"/><rect x="290" y="0" width="1" height="36" fill="#c0be54" opacity="0.8"/><rect x="290" y="37" width="1" height="35" fill="#ee8b43" opacity="0.8"/><rect x="296" y="0" width="1" height="36" fill="#bcc155" opacity="0.8"/><rect x="296" y="37" width="1" height="35" fill="#ee8743" opacity="0.8"/><rect x="301" y="0" width="1" height="36" fill="#bec055" opacity="0.8"/><rect x="301" y="37" width="1" height="35" fill="#ee8943" opacity="0.8"/><rect x="304" y="0" width="1" height="36" fill="#bdc055" opacity="0.8"/><rect x="304" y="37" width="1" height="35" fill="#ee8843" opacity="0.8"/><rect x="310" y="0" width="1" height="36" fill="#cab951" opacity="0.8"/><rect x="310" y="37" width="1" height="35" fill="#ef9343" opacity="0.8"/><rect x="343" y="0" width="1" height="36" fill="#ccb850" opacity="0.8"/><rect x="343" y="37" width="1" height="35" fill="#ec7c42" opacity="0.8"/><rect x="359" y="0" width="1" height="36" fill="#e3ab48" opacity="0.8"/><rect x="359" y="37" width="1" height="35" fill="#eba746" opacity="0.8"/><rect x="381" y="0" width="1" height="36" fill="#d5b34d" opacity="0.8"/><rect x="381" y="37" width="1" height="35" fill="#ed8342" opacity="0.8"/><rect x="387" y="0" width="1" height="36" fill="#d4b44d" opacity="0.8"/><rect x="387" y="37" width="1" height="35" fill="#ed8342" opacity="0.8"/><rect x="389" y="0" width="1" height="36" fill="#e1ac49" opacity="0.8"/><rect x="389" y="37" width="1" height="35" fill="#ef8e43" opacity="0.8"/><rect x="394" y="0" width="1" height="36" fill="#e4ab48" opacity="0.8"/><rect x="394" y="37" width="1" height="35" fill="#eaa846" opacity="0.8"/><rect x="403" y="0" width="1" height="36" fill="#c5bc52" opacity="0.8"/><rect x="403" y="37" width="1" height="35" fill="#ef8f43" opacity="0.8"/><rect x="455" y="0" width="1" height="36" fill="#c6bb52" opacity="0.8"/><rect x="455" y="37" width="1" height="35" fill="#ef9043" opacity="0.8"/><rect x="460" y="0" width="1" height="36" fill="#bcc155" opacity="0.8"/><rect x="460" y="37" width="1" height="35" fill="#ee8743" opacity="0.8"/><rect x="466" y="0" width="1" height="36" fill="#cab951" opacity="0.8"/><rect x="466" y="37" width="1" height="35" fill="#ef9343" opacity="0.8"/><rect x="472" y="0" width="1" height="36" fill="#bbc156" opacity="0.8"/><rect x="472" y="37" width="1" height="35" fill="#ed8642" opacity="0.8"/><rect x="490" y="0" width="1" height="36" fill="#cab951" opacity="0.8"/><rect x="490" y="37" width="1" height="35" fill="#ef9343" opacity="0.8"/><rect x="498" y="0" width="1" height="36" fill="#bcc155" opacity="0.8"/><rect x="498" y="37" width="1" height="35" fill="#ee8743" opacity="0.8"/><rect x="503" y="0" width="1" height="36" fill="#e5ab48" opacity="0.8"/><rect x="503" y="37" width="1" height="35" fill="#ef9143" opacity="0.8"/><rect x="521" y="0" width="1" height="36" fill="#dfae4a" opacity="0.8"/><rect x="521" y="37" width="1" height="35" fill="#ee8c43" opacity="0.8"/><rect x="530" y="0" width="1" height="36" fill="#ddaf4a" opacity="0.8"/><rect x="530" y="37" width="1" height="35" fill="#ee8a43" opacity="0.8"/><rect x="542" y="0" width="1" height="36" fill="#ddae4a" opacity="0.8"/><rect x="542" y="37" width="1" height="35" fill="#ee8b43" opacity="0.8"/><rect x="564" y="0" width="1" height="36" fill="#c5bc52" opacity="0.8"/><rect x="564" y="37" width="1" height="35" fill="#ef8f43" opacity="0.8"/><rect x="569" y="0" width="1" height="36" fill="#bdc055" opacity="0.8"/><rect x="569" y="37" width="1" height="35" fill="#ee8843" opacity="0.8"/><rect x="579" y="0" width="1" height="36" fill="#8cd25f" opacity="0.8"/><rect x="579" y="37" width="1" height="35" fill="#e65842" opacity="0.8"/><rect x="582" y="0" width="1" height="36" fill="#c4bc53" opacity="0.8"/><rect x="582" y="37" width="1" height="35" fill="#ef8f43" opacity="0.8"/><rect x="594" y="0" width="1" height="36" fill="#c6bb52" opacity="0.8"/><rect x="594" y="37" width="1" height="35" fill="#ef9043" opacity="0.8"/><rect x="602" y="0" width="1" height="36" fill="#c8ba51" opacity="0.8"/><rect x="602" y="37" width="1" height="35" fill="#ef9243" opacity="0.8"/><rect x="619" y="0" width="1" height="36" fill="#c8ba51" opacity="0.8"/><rect x="619" y="37" width="1" height="35" fill="#ef9243" opacity="0.8"/><rect x="630" y="0" width="1" height="36" fill="#e7a947" opacity="0.8"/><rect x="630" y="37" width="1" height="35" fill="#e7a947" opacity="0.8"/><rect x="643" y="0" width="1" height="36" fill="#e5aa48" opacity="0.8"/><rect x="643" y="37" width="1" height="35" fill="#e8a847" opacity="0.8"/><rect x="648" y="0" width="1" height="36" fill="#e3ab48" opacity="0.8"/><rect x="648" y="37" width="1" height="35" fill="#eba746" opacity="0.8"/><rect x="657" y="0" width="1" height="36" fill="#d5b34d" opacity="0.8"/><rect x="657" y="37" width="1" height="35" fill="#ed8442" opacity="0.8"/><rect x="675" y="0" width="1" height="36" fill="#e9a846" opacity="0.8"/><rect x="675" y="37" width="1" height="35" fill="#f09543" opacity="0.8"/><rect x="679" y="0" width="1" height="36" fill="#e9a846" opacity="0.8"/><rect x="679" y="37" width="1" height="35" fill="#f09543" opacity="0.8"/><rect x="715" y="0" width="1" height="36" fill="#e9a846" opacity="0.8"/><rect x="715" y="37" width="1" height="35" fill="#f09543" opacity="0.8"/><rect x="720" y="0" width="1" height="36" fill="#e6aa47" opacity="0.8"/><rect x="720" y="37" width="1" height="35" fill="#ef9243" opacity="0.8"/><rect x="723" y="0" width="1" height="36" fill="#ee8b43" opacity="0.8"/><rect x="723" y="37" width="1" height="35" fill="#ddaf4a" opacity="0.8"/><rect x="737" y="0" width="1" height="36" fill="#c5bc52" opacity="0.8"/><rect x="737" y="37" width="1" height="35" fill="#ef8f43" opacity="0.8"/><rect x="757" y="0" width="1" height="36" fill="#c2bd53" opacity="0.8"/><rect x="757" y="37" width="1" height="35" fill="#ee8c43" opacity="0.8"/><rect x="759" y="0" width="1" height="36" fill="#c2bd53" opacity="0.8"/><rect x="759" y="37" width="1" height="35" fill="#ee8c43" opacity="0.8"/><rect x="764" y="0" width="1" height="36" fill="#c2bd53" opacity="0.8"/><rect x="764" y="37" width="1" height="35" fill="#ee8c43" opacity="0.8"/><rect x="769" y="0" width="1" height="36" fill="#c8ba51" opacity="0.8"/><rect x="769" y="37" width="1" height="35" fill="#ef9243" opacity="0.8"/><rect x="774" y="0" width="1" height="36" fill="#bebf55" opacity="0.8"/><rect x="774" y="37" width="1" height="35" fill="#ee8943" opacity="0.8"/><rect x="793" y="0" width="1" height="36" fill="#c6bb52" opacity="0.8"/><rect x="793" y="37" width="1" height="35" fill="#ef9043" opacity="0.8"/><rect x="797" y="0" width="1" height="36" fill="#c3bd53" opacity="0.8"/><rect x="797" y="37" width="1" height="35" fill="#ee8d43" opacity="0.8"/><rect x="805" y="0" width="1" height="36" fill="#bec055" opacity="0.8"/><rect x="805" y="37" width="1" height="35" fill="#ee8943" opacity="0.8"/><rect x="808" y="0" width="1" height="36" fill="#e1ac49" opacity="0.8"/><rect x="808" y="37" width="1" height="35" fill="#ef8e43" opacity="0.8"/><rect x="837" y="0" width="1" height="36" fill="#e8a947" opacity="0.8"/><rect x="837" y="37" width="1" height="35" fill="#ef9443" opacity="0.8"/><rect x="840" y="0" width="1" height="36" fill="#e7a947" opacity="0.8"/><rect x="840" y="37" width="1" height="35" fill="#ef9343" opacity="0.8"/><rect x="862" y="0" width="1" height="36" fill="#ddaf4a" opacity="0.8"/><rect x="862" y="37" width="1" height="35" fill="#ee8a43" opacity="0.8"/><rect x="868" y="0" width="1" height="36" fill="#e9a846" opacity="0.8"/><rect x="868" y="37" width="1" height="35" fill="#f09543" opacity="0.8"/><rect x="881" y="0" width="1" height="36" fill="#e0ad49" opacity="0.8"/><rect x="881" y="37" width="1" height="35" fill="#ee8d43" opacity="0.8"/><rect x="891" y="0" width="1" height="36" fill="#e0ad49" opacity="0.8"/><rect x="891" y="37" width="1" height="35" fill="#ee8d43" opacity="0.8"/><rect x="904" y="0" width="1" height="36" fill="#e2ac49" opacity="0.8"/><rect x="904" y="37" width="1" height="35" fill="#ef8f43" opacity="0.8"/><rect x="910" y="0" width="1" height="36" fill="#dfae4a" opacity="0.8"/><rect x="910" y="37" width="1" height="35" fill="#ee8c43" opacity="0.8"/><rect x="920" y="0" width="1" height="36" fill="#e0ad49" opacity="0.8"/><rect x="920" y="37" width="1" height="35" fill="#ee8d43" opacity="0.8"/><rect x="923" y="0" width="1" height="36" fill="#e7a947" opacity="0.8"/><rect x="923" y="37" width="1" height="35" fill="#ef9443" opacity="0.8"/><rect x="933" y="0" width="1" height="36" fill="#eca645" opacity="0.8"/><rect x="933" y="37" width="1" height="35" fill="#f09843" opacity="0.8"/><rect x="951" y="0" width="1" height="36" fill="#e8a947" opacity="0.8"/><rect x="951" y="37" width="1" height="35" fill="#ef9443" opacity="0.8"/><rect x="961" y="0" width="1" height="36" fill="#d3b44e" opacity="0.8"/><rect x="961" y="37" width="1" height="35" fill="#f09c43" opacity="0.8"/><rect x="969" y="0" width="1" height="36" fill="#d0b64f" opacity="0.8"/><rect x="969" y="37" width="1" height="35" fill="#f09943" opacity="0.8"/><rect x="971" y="0" width="1" height="36" fill="#bcc155" opacity="0.8"/><rect x="971" y="37" width="1" height="35" fill="#ee8743" opacity="0.8"/><rect x="994" y="0" width="1" height="36" fill="#ceb74f" opacity="0.8"/><rect x="994" y="37" width="1" height="35" fill="#f09643" opacity="0.8"/><rect x="996" y="0" width="1" height="36" fill="#cfb64f" opacity="0.8"/><rect x="996" y="37" width="1" height="35" fill="#f09843" opacity="0.8"/><rect x="1004" y="0" width="1" height="36" fill="#ceb74f" opacity="0.8"/><rect x="1004" y="37" width="1" height="35" fill="#f09743" opacity="0.8"/><rect x="1008" y="0" width="1" height="36" fill="#c5bc52" opacity="0.8"/><rect x="1008" y="37" width="1" height="35" fill="#ef8f43" opacity="0.8"/><rect x="1012" y="0" width="1" height="36" fill="#c5bc52" opacity="0.8"/><rect x="1012" y="37" width="1" height="35" fill="#ef8f43" opacity="0.8"/><rect x="1028" y="0" width="1" height="36" fill="#bdc055" opacity="0.8"/><rect x="1028" y="37" width="1" height="35" fill="#ee8843" opacity="0.8"/><rect x="1039" y="0" width="1" height="36" fill="#ec7d42" opacity="0.8"/><rect x="1039" y="37" width="1" height="35" fill="#ceb74f" opacity="0.8"/><rect x="1043" y="0" width="1" height="36" fill="#ec7b42" opacity="0.8"/><rect x="1043" y="37" width="1" height="35" fill="#cbb850" opacity="0.8"/><rect x="1050" y="0" width="1" height="36" fill="#eca745" opacity="0.8"/><rect x="1050" y="37" width="1" height="35" fill="#f09743" opacity="0.8"/><rect x="1057" y="0" width="1" height="36" fill="#eb7342" opacity="0.8"/><rect x="1057" y="37" width="1" height="35" fill="#c3bd53" opacity="0.8"/><rect x="1059" y="0" width="1" height="36" fill="#ec7842" opacity="0.8"/><rect x="1059" y="37" width="1" height="35" fill="#c8ba51" opacity="0.8"/><rect x="1067" y="0" width="1" height="36" fill="#ec7842" opacity="0.8"/><rect x="1067" y="37" width="1" height="35" fill="#c8ba51" opacity="0.8"/><rect x="1073" y="0" width="1" height="36" fill="#e75f42" opacity="0.8"/><rect x="1073" y="37" width="1" height="35" fill="#abc95a" opacity="0.8"/><rect x="1086" y="0" width="1" height="36" fill="#eaa746" opacity="0.8"/><rect x="1086" y="37" width="1" height="35" fill="#f09643" opacity="0.8"/><rect x="1094" y="0" width="1" height="36" fill="#e4ab48" opacity="0.8"/><rect x="1094" y="37" width="1" height="35" fill="#ef9143" opacity="0.8"/><rect x="1101" y="0" width="1" height="36" fill="#e65b42" opacity="0.8"/><rect x="1101" y="37" width="1" height="35" fill="#a7ca5b" opacity="0.8"/><rect x="1109" y="0" width="1" height="36" fill="#eb7242" opacity="0.8"/><rect x="1109" y="37" width="1" height="35" fill="#c1be54" opacity="0.8"/><rect x="1112" y="0" width="1" height="36" fill="#eb7742" opacity="0.8"/><rect x="1112" y="37" width="1" height="35" fill="#c7bb52" opacity="0.8"/><rect x="1120" y="0" width="1" height="36" fill="#e65b42" opacity="0.8"/><rect x="1120" y="37" width="1" height="35" fill="#a7ca5b" opacity="0.8"/><rect x="1126" y="0" width="1" height="36" fill="#dfad4a" opacity="0.8"/><rect x="1126" y="37" width="1" height="35" fill="#ee8d43" opacity="0.8"/><rect x="1146" y="0" width="1" height="36" fill="#e6aa47" opacity="0.8"/><rect x="1146" y="37" width="1" height="35" fill="#ef9243" opacity="0.8"/><rect x="1171" y="0" width="1" height="36" fill="#ed8542" opacity="0.8"/><rect x="1171" y="37" width="1" height="35" fill="#d7b24c" opacity="0.8"/><rect x="1191" y="0" width="1" height="36" fill="#e86142" opacity="0.8"/><rect x="1191" y="37" width="1" height="35" fill="#aec85a" opacity="0.8"/><rect x="1199" y="0" width="1" height="36" fill="#eba746" opacity="0.8"/><rect x="1199" y="37" width="1" height="35" fill="#f09743" opacity="0.8"/><rect x="1208" y="0" width="1" height="36" fill="#ec7c42" opacity="0.8"/><rect x="1208" y="37" width="1" height="35" fill="#cdb850" opacity="0.8"/><rect x="1213" y="0" width="1" height="36" fill="#ed8542" opacity="0.8"/><rect x="1213" y="37" width="1" height="35" fill="#d7b24c" opacity="0.8"/><rect x="1219" y="0" width="1" height="36" fill="#e65942" opacity="0.8"/><rect x="1219" y="37" width="1" height="35" fill="#a5ca5b" opacity="0.8"/><rect x="1223" y="0" width="1" height="36" fill="#eb7742" opacity="0.8"/><rect x="1223" y="37" width="1" height="35" fill="#c6bb52" opacity="0.8"/><rect x="1232" y="0" width="1" height="36" fill="#ec7942" opacity="0.8"/><rect x="1232" y="37" width="1" height="35" fill="#c9ba51" opacity="0.8"/><rect x="1237" y="0" width="1" height="36" fill="#e75d42" opacity="0.8"/><rect x="1237" y="37" width="1" height="35" fill="#a9c95a" opacity="0.8"/><rect x="0" y="0" width="36" height="72" fill="#ffffff" opacity="0.12"/><rect x="0.6" y="0.6" width="34.8" height="70.8" rx="3" fill="none" stroke="#e0e0e0" stroke-width="1.2" opacity="0.75"/></svg>
<div class="t" style="left:97px;top:964.0px;height:18px;line-height:18px;font-size:14px;color:#a6a6a6;font-weight:bold;letter-spacing:-0.2px;">23456</div>
<div class="t" style="left:162px;top:964.0px;height:18px;line-height:18px;font-size:14px;color:#a6a6a6;font-weight:bold;letter-spacing:-0.2px;">7</div>
<div class="t" style="left:213px;top:964.0px;height:18px;line-height:18px;font-size:14px;color:#a6a6a6;font-weight:bold;letter-spacing:-0.2px;">8</div>
<div class="t" style="left:283px;top:964.0px;height:18px;line-height:18px;font-size:14px;color:#a6a6a6;font-weight:bold;letter-spacing:-0.2px;">9</div>
<div class="t" style="left:376px;top:964.0px;height:18px;line-height:18px;font-size:14px;color:#a6a6a6;font-weight:bold;letter-spacing:-0.2px;">T</div>
<div class="t" style="left:497px;top:964.0px;height:18px;line-height:18px;font-size:14px;color:#a6a6a6;font-weight:bold;letter-spacing:-0.2px;">J</div>
<div class="t" style="left:649px;top:964.0px;height:18px;line-height:18px;font-size:14px;color:#a6a6a6;font-weight:bold;letter-spacing:-0.2px;">Q</div>
<div class="t" style="left:834px;top:964.0px;height:18px;line-height:18px;font-size:14px;color:#a6a6a6;font-weight:bold;letter-spacing:-0.2px;">K</div>
<div class="t" style="left:1058px;top:964.0px;height:18px;line-height:18px;font-size:14px;color:#a6a6a6;font-weight:bold;letter-spacing:-0.2px;">A</div>
<svg style="position:absolute;left:0px;top:0px;pointer-events:none;" width="1920" height="1080" viewBox="0 0 1920 1080"><defs><filter id="bl" x="-5%" y="-50%" width="110%" height="200%"><feGaussianBlur stdDeviation="0.8"/></filter></defs><g fill="none" stroke="#e50000" stroke-width="11.5" filter="url(#bl)" stroke-linecap="round" stroke-linejoin="round">
<path d="M101,871 Q280,872 447,878 Q452,905 452,936 Q260,933 80,930 Q80,905 84,884"/>
<path d="M495,874 Q555,874 611,877 Q612,905 611,938 Q548,936 489,934 Q489,904 493,876"/>
<path d="M651,872 Q690,873 728,877 Q731,905 730,938 Q690,938 649,937 Q648,905 651,875"/>
<path d="M838,876 Q872,875 905,876 Q909,904 908,930 Q872,931 838,931 Q836,904 838,877"/>
<path d="M1047,878 Q1093,879 1138,881 Q1140,905 1140,933 Q1100,931 1062,930 Q1062,905 1062,884"/>
</g></svg>
<svg style="position:absolute;left:265px;top:799px;" width="19" height="26" viewBox="0 0 19 26"><path d="M7,2.2 Q7,0.8 8.4,0.8 Q9.8,0.8 9.8,2.2 V9.6 Q10.2,8.6 11.3,8.7 Q12.4,8.9 12.5,10 Q13,9.3 14,9.4 Q15,9.6 15.1,10.7 Q15.7,10.1 16.6,10.3 Q17.6,10.6 17.6,11.8 V17.5 Q17.6,21.5 15.2,24 H9.8 Q7.8,22 5.8,19.4 L1.4,14.6 Q0.6,13.5 1.6,12.9 Q2.7,12.3 3.8,13.3 L7,16 Z" fill="#fff" stroke="#1a1a1a" stroke-width="0.9"/><path d="M10,10 V14 M12.6,10.5 V14 M15.1,11 V14" stroke="#444" stroke-width="0.6"/></svg>
<div style="left:1380px;top:278px;width:531px;height:724px;background:#121212;"></div>
<div style="left:1384px;top:278px;width:523px;height:36px;background:#222;"></div>
<div style="left:1384px;top:314px;width:523px;height:29px;background:#1b1b1b;"></div>
<div style="left:1384px;top:343px;width:523px;height:1px;background:#2e2e2e;"></div>
<div style="left:1384px;top:344px;width:523px;height:28px;background:#1b1b1b;"></div>
<div class="t" style="left:1391px;top:285.2px;height:19px;line-height:19px;font-size:15px;color:#f0f0f0;font-weight:bold;">Player</div>
<div class="t" style="left:1497px;top:285.2px;height:19px;line-height:19px;font-size:15px;color:#f0f0f0;font-weight:bold;">EV</div>
<div class="t" style="left:1603px;top:285.2px;height:19px;line-height:19px;font-size:15px;color:#f0f0f0;font-weight:bold;">Equity</div>
<div class="t" style="left:1754px;top:285.2px;height:19px;line-height:19px;font-size:15px;color:#f0f0f0;font-weight:bold;">EQR</div>
<div class="t" style="left:1391px;top:319.3px;height:19px;line-height:19px;font-size:15px;color:#f0f0f0;font-weight:bold;">BB</div>
<div class="t" style="left:1391px;top:348.0px;height:19px;line-height:19px;font-size:15px;color:#f0f0f0;font-weight:bold;">BTN</div>
<svg style="position:absolute;left:1427px;top:351px;" width="14" height="13" viewBox="0 0 14 13"><path d="M0,3 L3.5,6 L7,0 L10.5,6 L14,3 L13,10 H1 Z" fill="#f0f0f0"/><rect x="1" y="11" width="12" height="2" fill="#f0f0f0"/></svg>
<svg style="position:absolute;left:1497px;top:325px;" width="11" height="6" viewBox="0 0 11 6"><path d="M0,0 H11 L5.5,6 Z" fill="#e0444f"/></svg>
<div class="t" style="left:1519px;top:319.4px;height:19.3px;line-height:19.3px;font-size:15.3px;color:#e0444f;font-weight:normal;letter-spacing:-0.2px;">1.94</div>
<svg style="position:absolute;left:1603px;top:325px;" width="11" height="6" viewBox="0 0 11 6"><path d="M0,0 H11 L5.5,6 Z" fill="#e0444f"/></svg>
<div class="t" style="left:1624px;top:319.4px;height:19.3px;line-height:19.3px;font-size:15.3px;color:#e0444f;font-weight:normal;letter-spacing:-0.2px;">45.99 %</div>
<svg style="position:absolute;left:1753px;top:325px;" width="11" height="6" viewBox="0 0 11 6"><path d="M0,0 H11 L5.5,6 Z" fill="#e0444f"/></svg>
<div class="t" style="left:1775px;top:319.4px;height:19.3px;line-height:19.3px;font-size:15.3px;color:#e0444f;font-weight:normal;letter-spacing:-0.2px;">76.44 %</div>
<svg style="position:absolute;left:1497px;top:355px;" width="11" height="6" viewBox="0 0 11 6"><path d="M0,6 H11 L5.5,0 Z" fill="#33c48f"/></svg>
<div class="t" style="left:1519px;top:348.2px;height:19.3px;line-height:19.3px;font-size:15.3px;color:#33c48f;font-weight:normal;letter-spacing:-0.2px;">3.15</div>
<svg style="position:absolute;left:1603px;top:355px;" width="11" height="6" viewBox="0 0 11 6"><path d="M0,6 H11 L5.5,0 Z" fill="#33c48f"/></svg>
<div class="t" style="left:1624px;top:348.2px;height:19.3px;line-height:19.3px;font-size:15.3px;color:#33c48f;font-weight:normal;letter-spacing:-0.2px;">54.01 %</div>
<svg style="position:absolute;left:1753px;top:355px;" width="11" height="6" viewBox="0 0 11 6"><path d="M0,6 H11 L5.5,0 Z" fill="#33c48f"/></svg>
<div class="t" style="left:1775px;top:348.2px;height:19.3px;line-height:19.3px;font-size:15.3px;color:#33c48f;font-weight:normal;letter-spacing:-0.2px;">105.89 %</div>
<div style="left:1384px;top:377px;width:171px;height:78px;background:#77141f;border-radius:4px;"></div>
<div class="t" style="left:1391.5px;top:381.8px;height:23.5px;line-height:23.5px;font-size:19.5px;color:#f4f4f4;font-weight:normal;letter-spacing:-0.2px;-webkit-text-stroke:0.45px #f4f4f4;">Bet 6.9</div>
<div class="t" style="left:1391.5px;top:405.2px;height:14.5px;line-height:14.5px;font-size:10.5px;color:#f0f0f0;font-weight:bold;letter-spacing:-0.2px;">125%</div>
<div class="t" style="left:1391.5px;top:430.4px;height:22.6px;line-height:22.6px;font-size:18.6px;color:#f4f4f4;font-weight:bold;letter-spacing:-0.4px;">8.3%</div>
<div style="left:1560px;top:377px;width:171px;height:78px;background:#9c1a2b;border-radius:4px;"></div>
<div class="t" style="left:1567.5px;top:381.8px;height:23.5px;line-height:23.5px;font-size:19.5px;color:#f4f4f4;font-weight:normal;letter-spacing:-0.2px;-webkit-text-stroke:0.45px #f4f4f4;">Bet 4.1</div>
<div class="t" style="left:1567.5px;top:405.2px;height:14.5px;line-height:14.5px;font-size:10.5px;color:#f0f0f0;font-weight:bold;letter-spacing:-0.2px;">75%</div>
<div class="t" style="left:1567.5px;top:430.4px;height:22.6px;line-height:22.6px;font-size:18.6px;color:#f4f4f4;font-weight:bold;letter-spacing:-0.4px;">8.5%</div>
<div style="left:1735px;top:377px;width:172px;height:78px;background:#c11f32;border-radius:4px;"></div>
<div class="t" style="left:1742.5px;top:381.8px;height:23.5px;line-height:23.5px;font-size:19.5px;color:#f4f4f4;font-weight:normal;letter-spacing:-0.2px;-webkit-text-stroke:0.45px #f4f4f4;">Bet 2.75</div>
<div class="t" style="left:1742.5px;top:405.2px;height:14.5px;line-height:14.5px;font-size:10.5px;color:#f0f0f0;font-weight:bold;letter-spacing:-0.2px;">50%</div>
<div class="t" style="left:1742.5px;top:430.4px;height:22.6px;line-height:22.6px;font-size:18.6px;color:#f4f4f4;font-weight:bold;letter-spacing:-0.4px;">10.8%</div>
<div style="left:1384px;top:460px;width:171px;height:78px;background:#de263a;border-radius:4px;"></div>
<div class="t" style="left:1391.5px;top:464.8px;height:23.5px;line-height:23.5px;font-size:19.5px;color:#f4f4f4;font-weight:normal;letter-spacing:-0.2px;-webkit-text-stroke:0.45px #f4f4f4;">Bet 1.8</div>
<div class="t" style="left:1391.5px;top:488.2px;height:14.5px;line-height:14.5px;font-size:10.5px;color:#f0f0f0;font-weight:bold;letter-spacing:-0.2px;">33%</div>
<div class="t" style="left:1391.5px;top:513.4px;height:22.6px;line-height:22.6px;font-size:18.6px;color:#f4f4f4;font-weight:bold;letter-spacing:-0.4px;">25.7%</div>
<div style="left:1560px;top:460px;width:171px;height:78px;background:#67c46a;border-radius:4px;"></div>
<div class="t" style="left:1567.5px;top:464.8px;height:23.5px;line-height:23.5px;font-size:19.5px;color:#f4f4f4;font-weight:normal;letter-spacing:-0.2px;-webkit-text-stroke:0.45px #f4f4f4;">Check</div>
<div class="t" style="left:1567.5px;top:513.4px;height:22.6px;line-height:22.6px;font-size:18.6px;color:#f4f4f4;font-weight:bold;letter-spacing:-0.4px;">46.7%</div>
<svg style="position:absolute;left:1384px;top:542px;" width="468" height="15" viewBox="0 0 468 15"><defs><clipPath id="pb"><rect x="0" y="0" width="468" height="15" rx="7.5"/></clipPath></defs><g clip-path="url(#pb)"><rect x="0" y="0" width="39" height="15" fill="#7a1420"/><rect x="39" y="0" width="40" height="15" fill="#9c1a2b"/><rect x="79" y="0" width="50" height="15" fill="#c11f32"/><rect x="129" y="0" width="120" height="15" fill="#de263a"/><rect x="249" y="0" width="219" height="15" fill="#5fbf65"/></g></svg>
<div style="left:1858px;top:540px;width:49px;height:18px;background:#262626;border-radius:3px;"></div>
<div style="left:1885px;top:542px;width:1px;height:14px;background:#3a3a3a;"></div>
<svg style="position:absolute;left:1866px;top:544.5px;" width="12" height="12" viewBox="0 0 12 12"><rect x="0" y="0" width="2.2" height="2.2" fill="#f0f0f0"/><rect x="0" y="3" width="2.2" height="2.2" fill="#f0f0f0"/><rect x="0" y="6" width="2.2" height="2.2" fill="#f0f0f0"/><rect x="0" y="9" width="2.2" height="2.2" fill="#f0f0f0"/><rect x="3" y="0" width="2.2" height="2.2" fill="#f0f0f0"/><rect x="3" y="3" width="2.2" height="2.2" fill="#f0f0f0"/><rect x="3" y="6" width="2.2" height="2.2" fill="#f0f0f0"/><rect x="3" y="9" width="2.2" height="2.2" fill="#f0f0f0"/><rect x="6" y="0" width="2.2" height="2.2" fill="#f0f0f0"/><rect x="6" y="3" width="2.2" height="2.2" fill="#f0f0f0"/><rect x="6" y="6" width="2.2" height="2.2" fill="#f0f0f0"/><rect x="6" y="9" width="2.2" height="2.2" fill="#f0f0f0"/><rect x="9" y="0" width="2.2" height="2.2" fill="#f0f0f0"/><rect x="9" y="3" width="2.2" height="2.2" fill="#f0f0f0"/><rect x="9" y="6" width="2.2" height="2.2" fill="#f0f0f0"/><rect x="9" y="9" width="2.2" height="2.2" fill="#f0f0f0"/></svg>
<svg style="position:absolute;left:1891px;top:547px;" width="10" height="5" viewBox="0 0 10 5"><path d="M0,0 H10 L5,5 Z" fill="#bbb"/></svg>
<div style="left:1384px;top:560px;width:527px;height:220px;background:#73dd6a;"></div>
<div style="left:1384px;top:780px;width:527px;height:222px;background:#dd2739;"></div>
<div style="left:1384px;top:560px;width:97px;height:21px;background:#f6f6f6;border-radius:3px 0 4px 0;"></div>
<div class="t" style="left:1391px;top:558.6px;height:22px;line-height:22px;font-size:19.5px;color:#6e1a22;font-weight:normal;-webkit-text-stroke:0.2px #f6f6f6;">4</div>
<svg style="position:absolute;left:1404px;top:563px;" width="15" height="14" viewBox="0 0 15 14"><path d="M7.5,14 L1.2,6.8 Q-0.6,4.4 0.9,2 Q2.6,-0.4 5.2,0.5 Q6.6,1 7.5,2.6 Q8.4,1 9.8,0.5 Q12.4,-0.4 14.1,2 Q15.6,4.4 13.8,6.8 Z" fill="#b0000c"/></svg>
<div class="t" style="left:1419.5px;top:558.6px;height:22px;line-height:22px;font-size:19.5px;color:#6e1a22;font-weight:normal;-webkit-text-stroke:0.2px #f6f6f6;">3</div>
<svg style="position:absolute;left:1432px;top:563px;" width="15" height="14" viewBox="0 0 15 14"><path d="M7.5,14 L1.2,6.8 Q-0.6,4.4 0.9,2 Q2.6,-0.4 5.2,0.5 Q6.6,1 7.5,2.6 Q8.4,1 9.8,0.5 Q12.4,-0.4 14.1,2 Q15.6,4.4 13.8,6.8 Z" fill="#b0000c"/></svg>
<div class="t" style="left:1447px;top:558.6px;height:22px;line-height:22px;font-size:19.5px;color:#6e1a22;font-weight:normal;-webkit-text-stroke:0.2px #f6f6f6;">2</div>
<svg style="position:absolute;left:1459px;top:563px;" width="15" height="14" viewBox="0 0 15 14"><path d="M7.5,14 L1.2,6.8 Q-0.6,4.4 0.9,2 Q2.6,-0.4 5.2,0.5 Q6.6,1 7.5,2.6 Q8.4,1 9.8,0.5 Q12.4,-0.4 14.1,2 Q15.6,4.4 13.8,6.8 Z" fill="#b0000c"/></svg>
<div style="left:1829px;top:560px;width:82px;height:21px;background:#5fbf5a;border-radius:0 0 0 4px;"></div>
<svg style="position:absolute;left:1845px;top:563px;" width="20" height="14" viewBox="0 0 20 14"><path d="M5,1 L15,1 Q18.5,1 19.3,5 L20,11 Q20,14 17.5,13.5 L14,10.5 L6,10.5 L2.5,13.5 Q0,14 0,11 L0.7,5 Q1.5,1 5,1 Z" fill="#f4f4f4"/><path d="M4,5 h4 M6,3 v4" stroke="#5fbf5a" stroke-width="1.1"/></svg>
<svg style="position:absolute;left:1881px;top:562px;" width="22" height="17" viewBox="0 0 22 17"><path d="M11,1 L22,6 L11,11 L0,6 Z" fill="#f4f4f4"/><path d="M4.5,8.5 L4.5,13 Q11,17 17.5,13 L17.5,8.5 L11,11.8 Z" fill="#f4f4f4"/><rect x="19.5" y="6" width="1.5" height="7" fill="#f4f4f4"/></svg>
<div class="t" style="left:1388px;top:731.0px;height:50px;line-height:50px;font-size:42.5px;color:#1d1d1d;font-weight:normal;-webkit-text-stroke:1.0px #73dd6a;letter-spacing:-1px;">BB</div>
<div class="t" style="right:10px;top:731.0px;height:50px;line-height:50px;font-size:42.5px;color:#1d1d1d;font-weight:normal;-webkit-text-stroke:1.0px #73dd6a;letter-spacing:-0.6px;">48.6%</div>
<div class="t" style="left:1388px;top:952.0px;height:50px;line-height:50px;font-size:42.5px;color:#1d1d1d;font-weight:normal;-webkit-text-stroke:1.0px #dd2739;letter-spacing:-1px;">BTN</div>
<svg style="position:absolute;left:1478px;top:962px;" width="12" height="11" viewBox="0 0 14 13"><path d="M0,3 L3.5,6 L7,0 L10.5,6 L14,3 L13,10 H1 Z" fill="#1d1d1d"/><rect x="1" y="11" width="12" height="2" fill="#1d1d1d"/></svg>
<div class="t" style="right:10px;top:952.0px;height:50px;line-height:50px;font-size:42.5px;color:#1d1d1d;font-weight:normal;-webkit-text-stroke:1.0px #dd2739;letter-spacing:-0.6px;">51.4%</div>
</body></html>
